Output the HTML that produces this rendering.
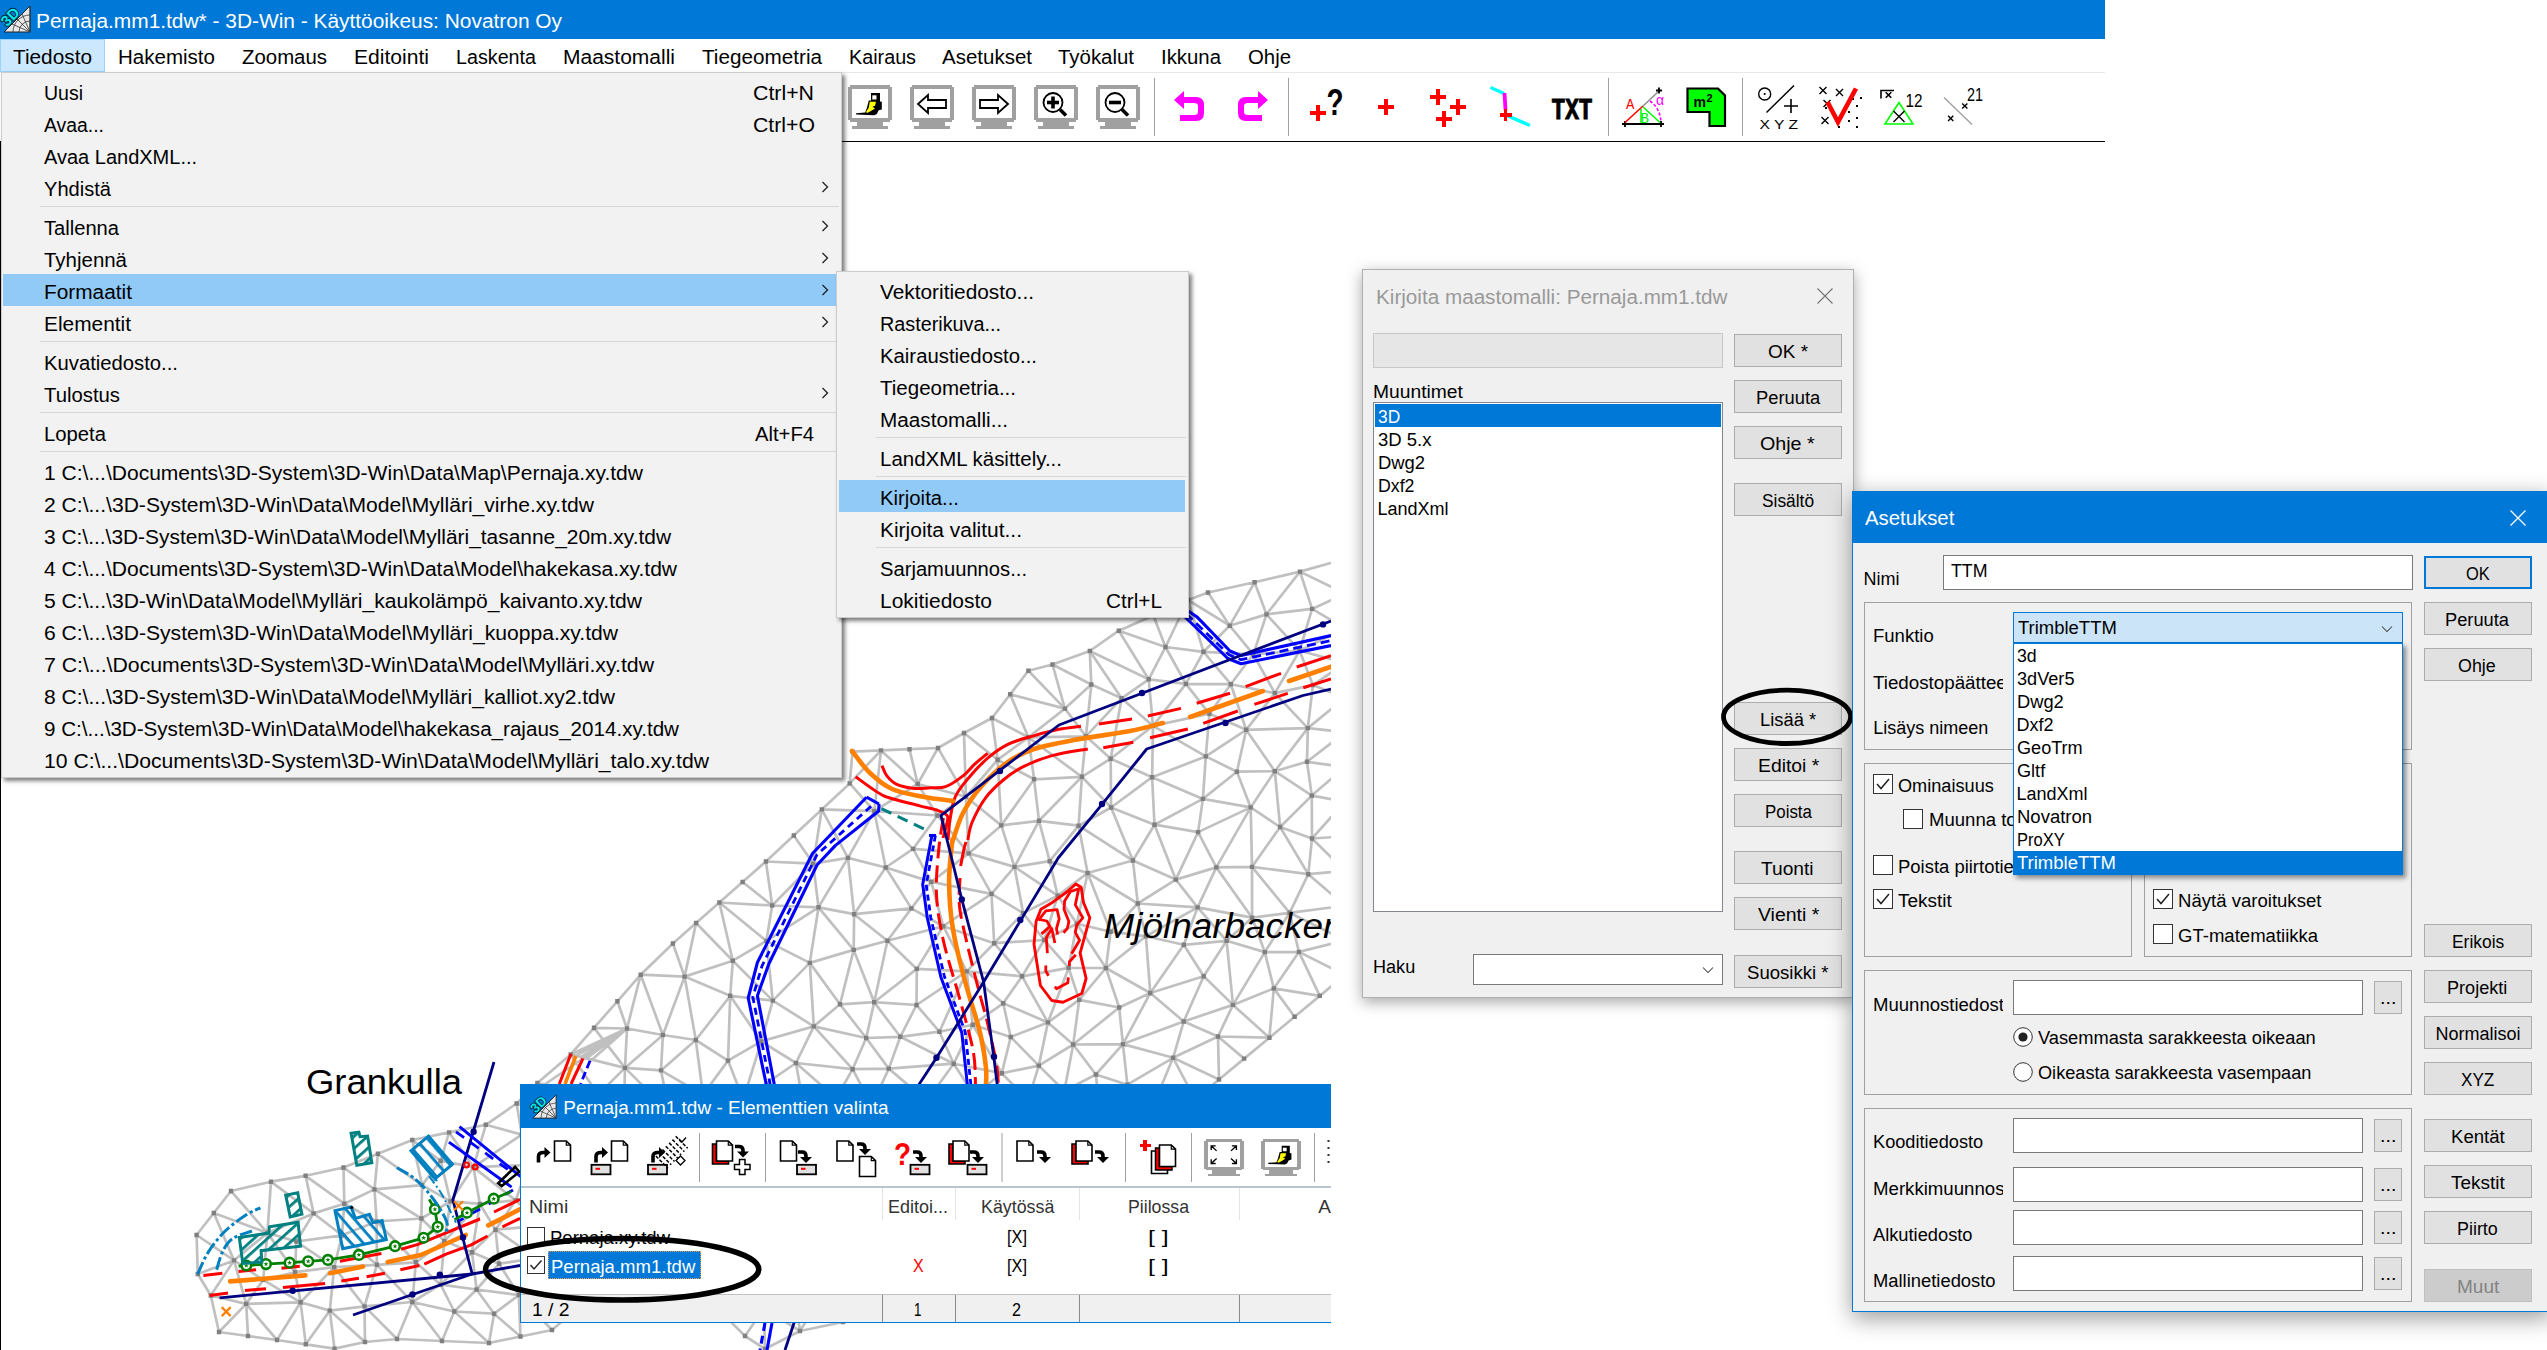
<!DOCTYPE html>
<html lang="fi"><head><meta charset="utf-8"><title>3D-Win</title><style>
html,body{margin:0;padding:0;background:#fff;}
body{width:2547px;height:1350px;position:relative;overflow:hidden;font-family:"Liberation Sans", sans-serif;}
.a{position:absolute;box-sizing:border-box;}
.t{position:absolute;white-space:pre;display:inline-block;}
svg{position:absolute;overflow:visible;}
</style></head><body>
<svg width="1331" height="1350" style="left:0;top:0;overflow:hidden" viewBox="0 0 1331 1350">
<path d="M1127.4 1084.7L1173.1 1057.8M472.0 1252.2L495.5 1229.7M968.6 1296.4L937.2 1302.8M943.2 926.2L911.4 908.4M948.7 1245.8L915.2 1238.2M277.0 1340.0L246.2 1303.9M909.5 749.2L917.7 784.0M630.6 1223.7L596.3 1280.0M1111.1 807.5L1078.6 825.7M449.1 1132.4L485.8 1124.8M1345.0 559.0L1345.0 593.7M916.8 968.9L887.4 940.8M968.7 853.4L931.3 881.9M616.2 1166.8L596.1 1194.5M972.7 1024.8L966.7 971.4M871.8 1105.4L926.8 1101.0M888.8 1068.6L926.8 1101.0M1073.2 1044.5L1064.3 1091.0M1001.3 825.4L997.6 759.8M515.6 1200.4L495.5 1229.7M727.0 1318.0L746.5 1276.2M1085.9 736.3L1081.9 776.8M1300.0 571.6L1266.5 614.4M1183.7 1021.5L1233.0 1004.9M616.2 1166.8L586.3 1128.1M1001.3 825.4L1039.0 820.8M1345.0 593.7L1345.0 628.3M938.0 748.0L965.9 796.8M765.0 1349.0L745.0 1336.0M827.2 1174.2L812.7 1205.6M854.1 914.2L885.7 867.5M1075.0 1207.5L1038.7 1196.6M1299.6 650.7L1312.1 608.9M295.1 1272.2L263.2 1279.9M840.0 1004.3L809.8 962.9M1269.4 1037.7L1218.0 1036.5M617.4 1001.3L640.7 974.7M625.0 1067.9L662.9 1035.0M728.9 1163.1L737.6 1202.7M745.0 1336.0L727.0 1318.0M968.7 853.4L1014.5 866.9M295.1 1272.2L267.4 1232.9M1203.7 976.3L1233.0 1004.9M1345.0 871.0L1308.3 874.2M640.7 974.7L672.9 943.5M566.0 1318.0L596.3 1280.0M1064.3 1091.0L1028.1 1100.2M1345.0 801.7L1345.0 836.3M552.0 1330.0L518.8 1295.1M412.3 1140.0L440.7 1160.8M1209.4 713.8L1153.0 725.9M521.8 1134.6L473.4 1167.1M1188.0 600.0L1229.7 625.7M1345.0 836.3L1345.0 871.0M1013.1 1219.4L1006.0 1175.3M1056.6 1124.4L1101.2 1128.4M630.6 1223.7L581.9 1231.5M566.0 1318.0L552.0 1330.0M1311.8 795.6L1312.0 838.5M1345.0 940.3L1298.9 951.9M1345.0 801.7L1312.0 838.5M1154.5 824.7L1202.9 798.9M795.3 1155.1L777.8 1197.1M1110.6 931.7L1076.9 923.7M1289.6 912.8L1252.0 866.9M743.3 1099.4L803.7 1107.5M1127.4 1084.7L1160.2 1088.7M854.6 1202.0L825.3 1236.5M552.0 1330.0L520.5 1336.5M953.7 1063.7L974.2 1095.2M966.0 1200.9L922.8 1196.7M878.9 1235.1L867.9 1282.6M376.9 1264.8L376.6 1221.5M1068.6 967.9L1044.2 940.0M1230.8 684.2L1185.9 683.9M536.7 1258.2L581.9 1231.5M825.3 1236.5L812.7 1205.6M821.8 809.4L849.7 783.4M1006.0 1175.3L1010.6 1134.7M334.2 1267.2L295.1 1272.2M905.8 1309.2L898.6 1268.5M1183.8 944.8L1197.6 907.4M1085.9 736.3L1028.4 737.3M1269.4 1037.7L1244.2 1058.6M1209.4 713.8L1205.8 756.4M1209.4 713.8L1230.8 684.2M1152.1 777.2L1110.7 758.7M1028.4 737.3L1064.9 708.6M1067.2 1164.9L1038.7 1196.6M1203.5 651.8L1165.5 647.0M1049.7 861.2L1039.0 820.8M623.6 1127.3L616.2 1166.8M1252.0 866.9L1250.7 807.4M772.2 905.5L813.2 863.6M640.7 974.7L684.6 976.6M543.9 1225.4L581.9 1231.5M1183.7 1021.5L1150.3 993.0M1252.0 866.9L1216.3 867.4M1154.5 824.7L1152.1 777.2M653.2 1286.0L709.5 1285.9M374.5 1189.4L421.4 1218.5M928.9 1152.1L922.8 1196.7M678.5 1176.3L649.5 1158.4M616.2 1166.8L649.5 1158.4M1127.4 1084.7L1095.9 1074.5M1022.1 976.3L994.2 943.2M1246.2 729.8L1274.8 771.2M874.3 811.2L913.1 848.9M937.4 815.5L913.1 848.9M953.7 1063.7L900.3 1036.8M1205.8 756.4L1153.0 725.9M625.0 1067.9L661.0 1070.4M1219.0 1079.5L1173.1 1057.8M1105.9 968.0L1119.2 1007.5M1010.2 694.4L1028.4 737.3M1047.9 1022.4L1022.1 976.3M728.9 1163.1L678.5 1176.3M1203.7 976.3L1150.3 993.0M1236.9 771.7L1250.7 807.4M1253.3 654.3L1266.5 614.4M1153.0 725.9L1110.7 758.7M444.3 1241.1L421.4 1218.5M1183.8 944.8L1150.3 993.0M271.0 1181.7L267.4 1232.9M1000.0 1290.0L981.8 1244.0M472.0 1252.2L440.6 1284.7M1153.4 615.4L1165.5 647.0M800.0 1331.0L791.9 1276.7M772.8 1000.6L813.8 1026.4M746.5 1276.2L764.1 1308.3M719.4 902.5L732.8 960.7M772.2 905.5L818.5 907.3M793.8 835.5L821.8 809.4M234.0 1260.4L246.2 1303.9M746.5 1276.2L709.5 1285.9M1273.8 988.4L1298.9 951.9M1110.6 931.7L1145.9 936.3M1274.8 771.2L1250.7 807.4M473.4 1167.1L450.5 1201.4M1294.6 1016.8L1269.4 1037.7M888.8 1068.6L900.3 1036.8M852.6 1069.2L796.0 1063.0M965.9 796.8L997.6 759.8M196.6 1235.0L197.8 1274.0M766.4 940.9L732.8 960.7M778.8 1237.0L791.9 1276.7M1280.1 827.0L1311.8 795.6M196.6 1235.0L234.0 1260.4M334.5 1348.6L305.8 1344.3M1253.3 654.3L1203.5 651.8M953.7 1063.7L1001.8 1073.2M1118.8 630.7L1148.7 679.3M964.0 733.0L992.0 718.0M1111.1 807.5L1110.7 758.7M1266.5 614.4L1229.7 625.7M412.3 1140.0L422.1 1185.1M365.0 1342.0L329.8 1310.6M854.6 1202.0L812.7 1205.6M1073.2 1044.5L1119.2 1007.5M305.8 1344.3L277.0 1340.0M992.0 718.0L1010.2 694.4M1123.8 1159.9L1100.0 1180.0M849.7 783.4L874.3 811.2M825.3 1236.5L833.4 1277.4M210.8 1295.5L246.2 1303.9M1001.8 1073.2L1010.7 1037.0M905.8 1309.2L867.9 1282.6M793.8 835.5L813.2 863.6M1175.8 879.6L1216.3 867.4M231.0 1191.0L271.0 1181.7M800.0 1331.0L833.4 1277.4M1236.9 771.7L1205.8 756.4M1105.9 968.0L1076.9 923.7M1100.0 1180.0L1075.0 1207.5M765.0 1349.0L764.1 1308.3M887.4 940.8L853.7 949.9M1001.3 825.4L1014.5 866.9M1028.4 737.3L1081.9 776.8M555.3 1114.7L598.3 1094.5M1111.1 807.5L1152.1 777.2M271.0 1181.7L305.6 1175.8M1153.4 615.4L1188.0 600.0M931.3 881.9L885.7 867.5M623.6 1127.3L649.5 1158.4M476.6 1289.5L494.1 1313.7M715.2 1249.2L704.2 1197.3M1121.6 698.3L1153.0 725.9M1188.0 600.0L1208.0 592.5M937.2 1302.8L905.8 1309.2M537.4 1083.0L555.3 1114.7M334.2 1267.2L296.3 1241.5M1298.9 951.9L1264.8 952.1M662.6 1318.0L653.2 1286.0M1110.6 931.7L1087.6 873.0M905.8 1309.2L874.4 1315.6M965.9 796.8L1001.3 825.4M854.6 1202.0L827.2 1174.2M516.6 1103.5L537.4 1083.0M518.8 1295.1L560.1 1284.9M1253.3 654.3L1299.6 650.7M682.8 1261.9L646.5 1252.8M1218.0 1036.5L1173.1 1057.8M476.6 1289.5L440.6 1284.7M871.8 1105.4L862.0 1150.9M1345.0 663.0L1345.0 697.7M1203.7 976.3L1226.6 940.8M948.7 1245.8L922.8 1196.7M1183.8 944.8L1226.6 940.8M1307.8 728.1L1307.0 761.8M661.0 1070.4L703.0 1094.8M1289.6 912.8L1308.3 874.2M1198.1 832.1L1175.8 879.6M305.8 1344.3L329.8 1310.6M415.9 1262.3L421.4 1218.5M1345.0 628.3L1299.6 650.7M694.8 1318.0L662.6 1318.0M728.9 1163.1L757.7 1139.4M796.0 1063.0L761.3 1041.4M898.6 1268.5L915.2 1238.2M1152.1 777.2L1153.0 725.9M684.6 976.6L695.8 1040.0M1127.4 1084.7L1122.9 1044.1M669.4 1112.2L661.0 1070.4M623.6 1127.3L669.4 1112.2M1345.0 767.0L1307.0 761.8M706.6 1128.9L703.0 1094.8M928.9 1152.1L926.8 1101.0M1269.4 1037.7L1273.8 988.4M640.7 974.7L627.0 1028.5M1068.6 967.9L1079.2 999.9M581.9 1231.5L596.1 1194.5M965.9 796.8L937.4 815.5M849.7 783.4L881.0 750.4M1067.2 1164.9L1056.6 1124.4M1274.8 693.1L1312.9 685.1M1073.2 1044.5L1038.8 1065.6M1105.9 968.0L1145.9 936.3M926.8 1101.0L974.2 1095.2M728.0 1060.6L703.0 1094.8M1100.0 1180.0L1101.2 1128.4M928.9 1152.1L959.0 1166.0M727.0 1318.0L709.5 1285.9M931.3 881.9L943.2 926.2M719.4 902.5L772.2 905.5M415.9 1262.3L376.6 1221.5M772.8 1000.6L766.4 940.9M943.2 926.2L994.2 943.2M515.6 1200.4L473.4 1167.1M772.8 1000.6L809.8 962.9M1188.0 600.0L1203.5 651.8M669.4 1112.2L625.0 1067.9M1006.0 1175.3L959.0 1166.0M916.5 1005.0L900.3 1036.8M485.8 1124.8L516.6 1103.5M1152.1 777.2L1205.8 756.4M706.6 1128.9L743.3 1099.4M821.8 809.4L848.0 857.9M694.8 1318.0L709.5 1285.9M646.9 1191.6L649.5 1158.4M1183.7 1021.5L1218.0 1036.5M1345.0 628.3L1345.0 663.0M1183.7 1021.5L1173.1 1057.8M1087.6 873.0L1057.7 895.7M305.6 1175.8L313.6 1213.4M695.8 1040.0L662.9 1035.0M728.0 1060.6L743.3 1099.4M727.0 1318.0L694.8 1318.0M472.0 1252.2L444.3 1241.1M1280.1 827.0L1308.3 874.2M489.0 1343.0L494.1 1313.7M1087.6 873.0L1076.9 923.7M840.0 1004.3L853.7 949.9M672.9 943.5L696.1 923.0M854.1 914.2L853.7 949.9M1226.6 940.8L1197.6 907.4M796.0 1063.0L803.7 1107.5M197.8 1274.0L234.0 1260.4M1345.0 697.7L1307.8 728.1M1100.0 1180.0L1067.2 1164.9M1252.1 917.7L1216.3 867.4M778.8 1237.0L825.3 1236.5M543.9 1225.4L515.6 1200.4M263.2 1279.9L246.2 1303.9M852.6 1069.2L836.0 1098.3M1345.0 871.0L1345.0 905.7M852.6 1069.2L866.2 1038.0M991.5 893.9L1014.5 866.9M489.0 1343.0L454.3 1311.5M343.5 1167.5L374.5 1189.4M365.0 1342.0L364.5 1306.4M1047.9 1022.4L1079.2 999.9M1345.0 905.7L1345.0 940.3M971.3 1132.3L1006.0 1175.3M1047.9 1022.4L1010.7 1037.0M520.5 1336.5L489.0 1343.0M1236.9 771.7L1202.9 798.9M342.0 1235.3L376.9 1264.8M1230.8 684.2L1203.5 651.8M1197.6 907.4L1252.1 917.7M630.6 1223.7L596.1 1194.5M931.3 881.9L991.5 893.9M313.6 1213.4L344.3 1203.7M1300.0 571.6L1345.0 593.7M849.7 783.4L852.5 751.6M479.9 1203.9L495.5 1229.7M809.8 962.9L813.8 1026.4M715.2 1249.2L746.5 1276.2M489.0 1343.0L442.0 1341.0M1057.7 895.7L1044.2 940.0M570.7 1054.4L598.3 1094.5M543.9 1225.4L558.2 1196.0M1274.8 771.2L1307.0 761.8M1246.2 729.8L1205.8 756.4M630.4 1318.0L596.3 1280.0M646.9 1191.6L678.5 1176.3M1246.2 729.8L1230.8 684.2M852.5 751.6L881.0 750.4M499.1 1263.7L518.8 1295.1M1244.2 1058.6L1219.0 1079.5M305.6 1175.8L344.3 1203.7M213.8 1213.0L267.4 1232.9M1085.9 736.3L1091.3 684.5M823.0 1135.9L795.3 1155.1M1028.4 670.7L1064.9 708.6M1050.0 1235.0L1038.7 1196.6M596.3 1280.0L646.5 1252.8M1219.0 1079.5L1195.2 1099.6M1064.3 1091.0L1095.9 1074.5M852.6 1069.2L813.8 1026.4M277.0 1340.0L248.0 1336.0M1132.9 860.5L1137.8 903.5M778.8 1237.0L777.8 1197.1M791.9 1276.7L825.3 1236.5M1010.6 1134.7L974.2 1095.2M570.7 1054.4L625.0 1067.9M1010.2 694.4L1028.4 670.7M1175.8 879.6L1197.6 907.4M695.8 1040.0L661.0 1070.4M1025.0 1262.5L1013.1 1219.4M1087.6 873.0L1078.6 825.7M248.0 1336.0L219.0 1332.0M964.0 733.0L965.9 796.8M376.6 1221.5L421.4 1218.5M1209.4 713.8L1185.9 683.9M1028.4 670.7L1052.5 664.5M1244.2 1058.6L1218.0 1036.5M518.8 1295.1L476.6 1289.5M454.3 1311.5L476.6 1289.5M364.5 1306.4L376.9 1264.8M1273.8 988.4L1233.0 1004.9M623.6 1127.3L598.3 1094.5M922.8 1196.7L889.5 1184.0M1050.0 1235.0L1025.0 1262.5M964.0 733.0L997.6 759.8M536.7 1258.2L560.1 1284.9M1105.9 968.0L1150.3 993.0M520.5 1336.5L518.8 1295.1M1067.2 1164.9L1010.6 1134.7M1252.0 866.9L1280.1 827.0M1010.7 1037.0L1003.2 1003.3M1280.1 827.0L1312.0 838.5M966.0 1200.9L981.8 1244.0M343.5 1167.5L377.9 1153.8M1047.9 1022.4L1068.6 967.9M669.4 1112.2L706.6 1128.9M1208.0 592.5L1229.7 625.7M889.5 1184.0L878.9 1235.1M1119.2 1007.5L1150.3 993.0M1345.0 975.0L1298.9 951.9M1252.0 866.9L1308.3 874.2M566.0 1318.0L560.1 1284.9M965.9 796.8L968.7 853.4M1289.6 912.8L1264.8 952.1M248.0 1336.0L246.2 1303.9M938.0 748.0L917.7 784.0M778.8 1237.0L812.7 1205.6M728.0 1060.6L695.8 1040.0M966.7 971.4L939.4 1031.7M1300.0 571.6L1312.1 608.9M809.8 962.9L818.5 907.3M848.0 857.9L854.1 914.2M968.6 1296.4L948.7 1245.8M1087.6 873.0L1049.7 861.2M1110.6 931.7L1137.8 903.5M562.1 1159.8L555.3 1114.7M1076.9 923.7L1044.2 940.0M1022.1 976.3L1044.2 940.0M630.6 1223.7L646.9 1191.6M1345.0 905.7L1308.3 874.2M1274.8 771.2L1280.1 827.0M833.4 1277.4L878.9 1235.1M1173.1 1057.8L1122.9 1044.1M672.9 943.5L684.6 976.6M422.1 1185.1L421.4 1218.5M900.3 1036.8L939.4 1031.7M449.1 1132.4L440.7 1160.8M968.7 853.4L991.5 893.9M673.8 1211.3L646.9 1191.6M1137.8 903.5L1197.6 907.4M1075.0 1207.5L1050.0 1235.0M499.1 1263.7L495.5 1229.7M706.6 1128.9L649.5 1158.4M1203.7 976.3L1183.7 1021.5M684.6 976.6L732.8 960.7M1345.0 836.3L1312.0 838.5M305.6 1175.8L343.5 1167.5M1345.0 905.7L1289.6 912.8M971.3 1132.3L1010.6 1134.7M528.3 1165.0L521.8 1134.6M1145.9 936.3L1150.3 993.0M596.3 1280.0L581.9 1231.5M1208.0 592.5L1254.6 582.3M234.0 1260.4L263.2 1279.9M627.0 1028.5L625.0 1067.9M874.4 1315.6L843.0 1322.0M213.8 1213.0L234.0 1260.4M342.0 1235.3L334.2 1267.2M874.2 1002.2L866.2 1038.0M537.4 1083.0L570.7 1054.4M1121.6 698.3L1091.3 684.5M300.6 1302.3L246.2 1303.9M823.0 1135.9L862.0 1150.9M803.7 1107.5L757.7 1139.4M777.8 1197.1L757.7 1139.4M479.9 1203.9L450.5 1201.4M1001.8 1073.2L974.2 1095.2M1001.8 1073.2L1038.8 1065.6M1345.0 593.7L1312.1 608.9M966.7 971.4L1003.2 1003.3M1345.0 697.7L1345.0 732.3M777.8 1197.1L812.7 1205.6M1122.9 1044.1L1095.9 1074.5M1023.1 913.1L1044.2 940.0M1147.6 1139.8L1101.2 1128.4M682.8 1261.9L653.2 1286.0M415.9 1262.3L376.9 1264.8M1209.4 713.8L1246.2 729.8M562.1 1159.8L528.3 1165.0M1081.9 776.8L1078.6 825.7M821.8 809.4L813.2 863.6M1195.2 1099.6L1173.1 1057.8M898.6 1268.5L878.9 1235.1M1010.7 1037.0L1038.8 1065.6M728.9 1163.1L777.8 1197.1M1052.5 664.5L1091.3 684.5M706.6 1128.9L678.5 1176.3M953.7 1063.7L972.7 1024.8M719.4 902.5L742.6 882.0M1345.0 767.0L1311.8 795.6M968.6 1296.4L981.8 1244.0M528.3 1165.0L558.2 1196.0M1307.8 728.1L1246.2 729.8M1289.6 912.8L1252.1 917.7M827.2 1174.2L795.3 1155.1M673.8 1211.3L682.8 1261.9M1056.6 1124.4L1028.1 1100.2M1188.0 600.0L1165.5 647.0M562.1 1159.8L558.2 1196.0M342.0 1235.3L313.6 1213.4M1311.8 795.6L1307.0 761.8M874.4 1315.6L867.9 1282.6M412.3 1302.0L415.9 1262.3M669.4 1112.2L703.0 1094.8M581.9 1231.5L558.2 1196.0M364.5 1306.4L334.2 1267.2M1023.1 913.1L1014.5 866.9M928.9 1152.1L889.5 1184.0M1047.9 1022.4L1003.2 1003.3M878.9 1235.1L915.2 1238.2M1183.7 1021.5L1122.9 1044.1M737.6 1202.7L777.8 1197.1M743.3 1099.4L703.0 1094.8M953.7 1063.7L939.4 1031.7M444.3 1241.1L440.6 1284.7M485.8 1124.8L521.8 1134.6M442.0 1341.0L412.3 1302.0M1132.9 860.5L1175.8 879.6M397.0 1339.0L365.0 1342.0M730.2 995.8L695.8 1040.0M1013.1 1219.4L981.8 1244.0M536.7 1258.2L499.1 1263.7M1198.1 832.1L1202.9 798.9M1319.8 995.9L1273.8 988.4M594.0 1027.8L627.0 1028.5M596.1 1194.5L558.2 1196.0M422.1 1185.1L440.7 1160.8M630.4 1318.0L653.2 1286.0M562.1 1159.8L596.1 1194.5M1175.8 879.6L1137.8 903.5M948.7 1245.8L981.8 1244.0M662.6 1318.0L630.4 1318.0M1148.7 679.3L1185.9 683.9M791.9 1276.7L833.4 1277.4M1203.5 651.8L1185.9 683.9M848.0 857.9L813.2 863.6M1195.2 1099.6L1160.2 1088.7M1173.1 1057.8L1160.2 1088.7M1345.0 663.0L1299.6 650.7M646.5 1252.8L653.2 1286.0M1067.2 1164.9L1006.0 1175.3M1111.1 807.5L1154.5 824.7M1085.9 736.3L1110.7 758.7M1345.0 940.3L1345.0 975.0M916.8 968.9L874.2 1002.2M342.0 1235.3L344.3 1203.7M1253.3 654.3L1230.8 684.2M745.0 1336.0L764.1 1308.3M444.3 1241.1L450.5 1201.4M342.0 1235.3L296.3 1241.5M515.6 1200.4L528.3 1165.0M1111.1 807.5L1081.9 776.8M715.2 1249.2L709.5 1285.9M334.2 1267.2L300.6 1302.3M555.3 1114.7L586.3 1128.1M928.9 1152.1L971.3 1132.3M521.8 1134.6L555.3 1114.7M364.5 1306.4L329.8 1310.6M412.3 1302.0L440.6 1284.7M772.8 1000.6L732.8 960.7M1226.6 940.8L1264.8 952.1M499.1 1263.7L476.6 1289.5M479.9 1203.9L473.4 1167.1M1236.9 771.7L1246.2 729.8M422.1 1185.1L374.5 1189.4M449.1 1132.4L473.4 1167.1M715.2 1249.2L737.6 1202.7M1203.5 651.8L1229.7 625.7M515.6 1200.4L558.2 1196.0M848.0 857.9L818.5 907.3M874.2 1002.2L900.3 1036.8M581.9 1231.5L560.1 1284.9M778.8 1237.0L746.5 1276.2M1101.2 1128.4L1095.9 1074.5M1127.4 1084.7L1101.2 1128.4M974.2 1095.2L1028.1 1100.2M1274.8 771.2L1311.8 795.6M1150.3 993.0L1122.9 1044.1M374.5 1189.4L344.3 1203.7M536.7 1258.2L518.8 1295.1M728.9 1163.1L704.2 1197.3M1299.6 650.7L1266.5 614.4M966.0 1200.9L948.7 1245.8M803.7 1107.5L836.0 1098.3M871.8 1105.4L899.4 1133.4M295.1 1272.2L300.6 1302.3M881.0 750.4L909.5 749.2M1148.7 679.3L1121.6 698.3M1198.1 832.1L1154.5 824.7M1132.9 860.5L1154.5 824.7M518.8 1295.1L494.1 1313.7M454.3 1311.5L494.1 1313.7M566.0 1318.0L518.8 1295.1M334.2 1267.2L376.9 1264.8M885.7 867.5L913.1 848.9M1047.9 1022.4L1073.2 1044.5M696.1 923.0L719.4 902.5M931.3 881.9L913.1 848.9M1345.0 663.0L1312.9 685.1M673.8 1211.3L704.2 1197.3M823.0 1135.9L803.7 1107.5M887.4 940.8L854.1 914.2M796.0 1063.0L836.0 1098.3M994.2 943.2L1044.2 940.0M596.3 1280.0L653.2 1286.0M479.9 1203.9L444.3 1241.1M1250.7 807.4L1216.3 867.4M706.6 1128.9L757.7 1139.4M1039.0 820.8L1078.6 825.7M874.3 811.2L885.7 867.5M818.5 907.3L813.2 863.6M1198.1 832.1L1250.7 807.4M1047.9 1022.4L1038.8 1065.6M313.6 1213.4L296.3 1241.5M695.8 1040.0L703.0 1094.8M971.3 1132.3L926.8 1101.0M1198.1 832.1L1216.3 867.4M1081.9 776.8L1110.7 758.7M827.2 1174.2L862.0 1150.9M916.8 968.9L966.7 971.4M454.3 1311.5L440.6 1284.7M937.2 1302.8L898.6 1268.5M916.8 968.9L916.5 1005.0M1075.0 1207.5L1067.2 1164.9M305.8 1344.3L300.6 1302.3M887.4 940.8L911.4 908.4M1034.1 779.3L1081.9 776.8M881.0 750.4L917.7 784.0M442.0 1341.0L397.0 1339.0M972.7 1024.8L939.4 1031.7M1280.1 827.0L1250.7 807.4M640.7 974.7L662.9 1035.0M991.5 893.9L943.2 926.2M971.3 1132.3L959.0 1166.0M888.8 1068.6L953.7 1063.7M742.6 882.0L772.2 905.5M871.8 1105.4L823.0 1135.9M1087.6 873.0L1137.8 903.5M415.9 1262.3L440.6 1284.7M772.8 1000.6L761.3 1041.4M796.0 1063.0L813.8 1026.4M848.0 857.9L885.7 867.5M1028.1 1100.2L1038.8 1065.6M627.0 1028.5L662.9 1035.0M1067.2 1164.9L1101.2 1128.4M1299.6 650.7L1274.8 693.1M1195.2 1099.6L1171.4 1119.7M343.5 1167.5L344.3 1203.7M300.6 1302.3L329.8 1310.6M1307.8 728.1L1274.8 693.1M1308.3 874.2L1312.0 838.5M1252.0 866.9L1252.1 917.7M1022.1 976.3L1068.6 967.9M673.8 1211.3L715.2 1249.2M1076.9 923.7L1068.6 967.9M450.5 1201.4L421.4 1218.5M833.4 1277.4L867.9 1282.6M219.0 1332.0L210.8 1295.5M825.3 1236.5L878.9 1235.1M1049.7 861.2L1057.7 895.7M871.8 1105.4L836.0 1098.3M1034.1 779.3L997.6 759.8M888.8 1068.6L866.2 1038.0M916.8 968.9L943.2 926.2M598.3 1094.5L586.3 1128.1M1052.5 664.5L1089.8 651.0M231.0 1191.0L267.4 1232.9M1034.1 779.3L1039.0 820.8M937.2 1302.8L948.7 1245.8M728.0 1060.6L761.3 1041.4M898.6 1268.5L948.7 1245.8M728.9 1163.1L706.6 1128.9M899.4 1133.4L862.0 1150.9M1147.6 1139.8L1127.4 1084.7M1202.9 798.9L1250.7 807.4M1226.6 940.8L1252.1 917.7M1025.0 1262.5L1000.0 1290.0M1121.6 698.3L1110.7 758.7M1273.8 988.4L1264.8 952.1M536.7 1258.2L495.5 1229.7M1345.0 732.3L1307.8 728.1M922.8 1196.7L915.2 1238.2M377.9 1153.8L412.3 1140.0M916.5 1005.0L939.4 1031.7M889.5 1184.0L862.0 1150.9M1154.5 824.7L1175.8 879.6M623.6 1127.3L625.0 1067.9M442.0 1341.0L454.3 1311.5M377.9 1153.8L374.5 1189.4M684.6 976.6L662.9 1035.0M818.5 907.3L853.7 949.9M1300.0 571.6L1345.0 559.0M1197.6 907.4L1216.3 867.4M669.4 1112.2L649.5 1158.4M1132.9 860.5L1078.6 825.7M412.3 1302.0L376.9 1264.8M730.2 995.8L728.0 1060.6M1073.2 1044.5L1095.9 1074.5M543.9 1225.4L495.5 1229.7M800.0 1331.0L765.0 1349.0M766.4 940.9L818.5 907.3M968.7 853.4L913.1 848.9M1145.9 936.3L1197.6 907.4M1089.8 651.0L1148.7 679.3M1266.5 614.4L1312.1 608.9M971.3 1132.3L974.2 1095.2M888.8 1068.6L871.8 1105.4M972.7 1024.8L1003.2 1003.3M1269.4 1037.7L1233.0 1004.9M598.2 1318.0L596.3 1280.0M479.9 1203.9L472.0 1252.2M871.8 1105.4L852.6 1069.2M888.8 1068.6L852.6 1069.2M1056.6 1124.4L1010.6 1134.7M966.7 971.4L916.5 1005.0M1025.0 1262.5L981.8 1244.0M1006.0 1175.3L1038.7 1196.6M1052.5 664.5L1064.9 708.6M966.7 971.4L994.2 943.2M898.6 1268.5L867.9 1282.6M765.9 861.5L772.2 905.5M730.2 995.8L732.8 960.7M1085.9 736.3L1121.6 698.3M1233.0 1004.9L1264.8 952.1M1148.7 679.3L1165.5 647.0M313.6 1213.4L267.4 1232.9M1022.1 976.3L966.7 971.4M473.4 1167.1L440.7 1160.8M772.8 1000.6L730.2 995.8M795.3 1155.1L757.7 1139.4M594.0 1027.8L625.0 1067.9M1034.1 779.3L1001.3 825.4M926.8 1101.0L899.4 1133.4M1049.7 861.2L1078.6 825.7M730.2 995.8L684.6 976.6M342.0 1235.3L376.6 1221.5M1202.9 798.9L1205.8 756.4M809.8 962.9L853.7 949.9M795.3 1155.1L812.7 1205.6M562.1 1159.8L521.8 1134.6M1299.6 650.7L1312.9 685.1M1219.0 1079.5L1218.0 1036.5M1307.8 728.1L1312.9 685.1M854.6 1202.0L878.9 1235.1M854.1 914.2L911.4 908.4M623.6 1127.3L586.3 1128.1M625.0 1067.9L598.3 1094.5M596.3 1280.0L560.1 1284.9M1254.6 582.3L1300.0 571.6M719.4 902.5L766.4 940.9M1345.0 940.3L1289.6 912.8M966.7 971.4L943.2 926.2M1252.1 917.7L1264.8 952.1M992.0 718.0L997.6 759.8M234.0 1260.4L267.4 1232.9M1056.6 1124.4L1064.3 1091.0M854.6 1202.0L862.0 1150.9M694.8 1318.0L653.2 1286.0M1345.0 801.7L1311.8 795.6M377.9 1153.8L422.1 1185.1M412.3 1302.0L364.5 1306.4M889.5 1184.0L899.4 1133.4M922.8 1196.7L959.0 1166.0M1254.6 582.3L1229.7 625.7M1039.0 820.8L1014.5 866.9M843.0 1322.0L800.0 1331.0M1319.8 995.9L1298.9 951.9M1345.0 871.0L1312.0 838.5M440.7 1160.8L450.5 1201.4M673.8 1211.3L678.5 1176.3M570.7 1054.4L594.0 1027.8M821.8 809.4L874.3 811.2M1165.5 647.0L1185.9 683.9M219.0 1332.0L246.2 1303.9M766.4 940.9L809.8 962.9M765.9 861.5L813.2 863.6M1289.6 912.8L1298.9 951.9M992.0 718.0L1028.4 737.3M594.0 1027.8L617.4 1001.3M1345.0 732.3L1345.0 767.0M800.0 1331.0L764.1 1308.3M1132.9 860.5L1111.1 807.5M334.5 1348.6L329.8 1310.6M840.0 1004.3L866.2 1038.0M1132.9 860.5L1087.6 873.0M1022.1 976.3L1003.2 1003.3M796.0 1063.0L743.3 1099.4M472.0 1252.2L476.6 1289.5M965.9 796.8L917.7 784.0M778.8 1237.0L715.2 1249.2M397.0 1339.0L412.3 1302.0M1118.8 630.7L1165.5 647.0M1345.0 767.0L1345.0 801.7M300.6 1302.3L263.2 1279.9M630.4 1318.0L598.2 1318.0M843.0 1322.0L833.4 1277.4M1345.0 732.3L1307.0 761.8M696.1 923.0L732.8 960.7M617.4 1001.3L627.0 1028.5M742.6 882.0L765.9 861.5M1307.8 728.1L1274.8 771.2M334.2 1267.2L329.8 1310.6M1110.6 931.7L1105.9 968.0M937.4 815.5L874.3 811.2M1010.6 1134.7L1028.1 1100.2M1119.2 1007.5L1122.9 1044.1M598.2 1318.0L566.0 1318.0M516.6 1103.5L555.3 1114.7M730.2 995.8L761.3 1041.4M376.6 1221.5L374.5 1189.4M1023.1 913.1L994.2 943.2M1345.0 628.3L1312.1 608.9M887.4 940.8L874.2 1002.2M696.1 923.0L684.6 976.6M765.9 861.5L793.8 835.5M267.4 1232.9L296.3 1241.5M1345.0 975.0L1319.8 995.9M1123.8 1159.9L1101.2 1128.4M928.9 1152.1L899.4 1133.4M1006.0 1175.3L966.0 1200.9M1253.3 654.3L1274.8 693.1M972.7 1024.8L1010.7 1037.0M1014.5 866.9L1057.7 895.7M562.1 1159.8L616.2 1166.8M840.0 1004.3L813.8 1026.4M415.9 1262.3L444.3 1241.1M1319.8 995.9L1294.6 1016.8M499.1 1263.7L472.0 1252.2M1089.8 651.0L1091.3 684.5M661.0 1070.4L662.9 1035.0M646.9 1191.6L616.2 1166.8M528.3 1165.0L473.4 1167.1M854.6 1202.0L889.5 1184.0M1064.3 1091.0L1038.8 1065.6M1013.1 1219.4L1038.7 1196.6M1105.9 968.0L1079.2 999.9M778.8 1237.0L737.6 1202.7M909.5 749.2L938.0 748.0M1064.3 1091.0L1101.2 1128.4M848.0 857.9L874.3 811.2M365.0 1342.0L334.5 1348.6M900.3 1036.8L866.2 1038.0M772.2 905.5L766.4 940.9M1274.8 693.1L1230.8 684.2M646.9 1191.6L596.1 1194.5M536.7 1258.2L543.9 1225.4M938.0 748.0L964.0 733.0M1064.9 708.6L1091.3 684.5M562.1 1159.8L586.3 1128.1M1119.2 1007.5L1079.2 999.9M795.3 1155.1L803.7 1107.5M516.6 1103.5L521.8 1134.6M1073.2 1044.5L1122.9 1044.1M520.5 1336.5L494.1 1313.7M1147.6 1139.8L1123.8 1159.9M376.6 1221.5L344.3 1203.7M937.4 815.5L917.7 784.0M874.3 811.2L917.7 784.0M412.3 1302.0L454.3 1311.5M1028.4 737.3L997.6 759.8M791.9 1276.7L764.1 1308.3M213.8 1213.0L231.0 1191.0M823.0 1135.9L827.2 1174.2M479.9 1203.9L515.6 1200.4M1076.9 923.7L1057.7 895.7M1294.6 1016.8L1273.8 988.4M295.1 1272.2L296.3 1241.5M1148.7 679.3L1153.0 725.9M761.3 1041.4L813.8 1026.4M1085.9 736.3L1064.9 708.6M966.0 1200.9L959.0 1166.0M397.0 1339.0L364.5 1306.4M1039.0 820.8L1081.9 776.8M1253.3 654.3L1229.7 625.7M1153.0 725.9L1185.9 683.9M813.8 1026.4L866.2 1038.0M422.1 1185.1L450.5 1201.4M1171.4 1119.7L1160.2 1088.7M1236.9 771.7L1274.8 771.2M1073.2 1044.5L1079.2 999.9M881.0 750.4L874.3 811.2M968.7 853.4L1001.3 825.4M537.4 1083.0L598.3 1094.5M843.0 1322.0L867.9 1282.6M1049.7 861.2L1014.5 866.9M630.6 1223.7L646.5 1252.8M271.0 1181.7L313.6 1213.4M1246.2 729.8L1274.8 693.1M727.0 1318.0L764.1 1308.3M743.3 1099.4L757.7 1139.4M1145.9 936.3L1137.8 903.5M1218.0 1036.5L1233.0 1004.9M854.1 914.2L818.5 907.3M1147.6 1139.8L1160.2 1088.7M1105.9 968.0L1068.6 967.9M277.0 1340.0L300.6 1302.3M1010.2 694.4L1064.9 708.6M1226.6 940.8L1233.0 1004.9M1001.8 1073.2L972.7 1024.8M673.8 1211.3L646.5 1252.8M1023.1 913.1L991.5 893.9M885.7 867.5L911.4 908.4M991.5 893.9L994.2 943.2M485.8 1124.8L473.4 1167.1M1171.4 1119.7L1147.6 1139.8M682.8 1261.9L715.2 1249.2M737.6 1202.7L704.2 1197.3M931.3 881.9L911.4 908.4M1050.0 1235.0L1013.1 1219.4M823.0 1135.9L836.0 1098.3M196.6 1235.0L213.8 1213.0M874.2 1002.2L853.7 949.9M953.7 1063.7L926.8 1101.0M1089.8 651.0L1121.6 698.3M673.8 1211.3L630.6 1223.7M210.8 1295.5L197.8 1274.0M887.4 940.8L943.2 926.2M1013.1 1219.4L966.0 1200.9M968.7 853.4L937.4 815.5M1203.7 976.3L1183.8 944.8M1028.4 737.3L1034.1 779.3M210.8 1295.5L234.0 1260.4M791.9 1276.7L746.5 1276.2M1001.8 1073.2L1028.1 1100.2M1089.8 651.0L1118.8 630.7M840.0 1004.3L874.2 1002.2M1183.8 944.8L1145.9 936.3M678.5 1176.3L704.2 1197.3M1202.9 798.9L1152.1 777.2M1023.1 913.1L1057.7 895.7M263.2 1279.9L267.4 1232.9M1118.8 630.7L1153.4 615.4M682.8 1261.9L709.5 1285.9M743.3 1099.4L761.3 1041.4M1000.0 1290.0L968.6 1296.4M916.5 1005.0L874.2 1002.2M1345.0 697.7L1312.9 685.1M922.8 1196.7L878.9 1235.1M1254.6 582.3L1266.5 614.4M412.3 1140.0L449.1 1132.4M627 1028.5L570.7 1054.4M627 1028.5L575 1056M627 1028.5L580 1057.5M627 1028.5L585 1059.5M627 1028.5L590 1061.5M627 1028.5L516.6 1103.5" fill="none" stroke="#c0c0c0" stroke-width="2.700"/><path d="M194.4 1232.8h4.4v4.4h-4.4zM211.6 1210.8h4.4v4.4h-4.4zM228.8 1188.8h4.4v4.4h-4.4zM268.8 1179.5h4.4v4.4h-4.4zM303.4 1173.6h4.4v4.4h-4.4zM341.3 1165.3h4.4v4.4h-4.4zM375.7 1151.5h4.4v4.4h-4.4zM410.1 1137.8h4.4v4.4h-4.4zM446.9 1130.2h4.4v4.4h-4.4zM483.6 1122.6h4.4v4.4h-4.4zM514.4 1101.3h4.4v4.4h-4.4zM535.2 1080.8h4.4v4.4h-4.4zM568.5 1052.2h4.4v4.4h-4.4zM591.8 1025.6h4.4v4.4h-4.4zM615.2 999.1h4.4v4.4h-4.4zM638.5 972.5h4.4v4.4h-4.4zM670.7 941.3h4.4v4.4h-4.4zM693.9 920.8h4.4v4.4h-4.4zM717.2 900.3h4.4v4.4h-4.4zM740.4 879.8h4.4v4.4h-4.4zM763.7 859.3h4.4v4.4h-4.4zM791.6 833.3h4.4v4.4h-4.4zM819.6 807.2h4.4v4.4h-4.4zM847.5 781.2h4.4v4.4h-4.4zM850.3 749.4h4.4v4.4h-4.4zM878.8 748.2h4.4v4.4h-4.4zM907.3 747.0h4.4v4.4h-4.4zM935.8 745.8h4.4v4.4h-4.4zM961.8 730.8h4.4v4.4h-4.4zM989.8 715.8h4.4v4.4h-4.4zM1008.0 692.1h4.4v4.4h-4.4zM1026.2 668.5h4.4v4.4h-4.4zM1050.3 662.3h4.4v4.4h-4.4zM1087.6 648.8h4.4v4.4h-4.4zM1116.6 628.5h4.4v4.4h-4.4zM1151.2 613.1h4.4v4.4h-4.4zM1185.8 597.8h4.4v4.4h-4.4zM1205.8 590.3h4.4v4.4h-4.4zM1252.4 580.1h4.4v4.4h-4.4zM1297.8 569.4h4.4v4.4h-4.4zM1342.8 556.8h4.4v4.4h-4.4zM1342.8 591.5h4.4v4.4h-4.4zM1342.8 626.1h4.4v4.4h-4.4zM1342.8 660.8h4.4v4.4h-4.4zM1342.8 695.5h4.4v4.4h-4.4zM1342.8 730.1h4.4v4.4h-4.4zM1342.8 764.8h4.4v4.4h-4.4zM1342.8 799.5h4.4v4.4h-4.4zM1342.8 834.1h4.4v4.4h-4.4zM1342.8 868.8h4.4v4.4h-4.4zM1342.8 903.5h4.4v4.4h-4.4zM1342.8 938.1h4.4v4.4h-4.4zM1342.8 972.8h4.4v4.4h-4.4zM1317.6 993.7h4.4v4.4h-4.4zM1292.4 1014.6h4.4v4.4h-4.4zM1267.2 1035.5h4.4v4.4h-4.4zM1242.0 1056.4h4.4v4.4h-4.4zM1216.8 1077.3h4.4v4.4h-4.4zM1193.0 1097.4h4.4v4.4h-4.4zM1169.2 1117.5h4.4v4.4h-4.4zM1145.4 1137.6h4.4v4.4h-4.4zM1121.6 1157.7h4.4v4.4h-4.4zM1097.8 1177.8h4.4v4.4h-4.4zM1072.8 1205.3h4.4v4.4h-4.4zM1047.8 1232.8h4.4v4.4h-4.4zM1022.8 1260.3h4.4v4.4h-4.4zM997.8 1287.8h4.4v4.4h-4.4zM966.4 1294.2h4.4v4.4h-4.4zM935.0 1300.6h4.4v4.4h-4.4zM903.6 1307.0h4.4v4.4h-4.4zM872.2 1313.4h4.4v4.4h-4.4zM840.8 1319.8h4.4v4.4h-4.4zM797.8 1328.8h4.4v4.4h-4.4zM762.8 1346.8h4.4v4.4h-4.4zM742.8 1333.8h4.4v4.4h-4.4zM724.8 1315.8h4.4v4.4h-4.4zM692.6 1315.8h4.4v4.4h-4.4zM660.4 1315.8h4.4v4.4h-4.4zM628.2 1315.8h4.4v4.4h-4.4zM596.0 1315.8h4.4v4.4h-4.4zM563.8 1315.8h4.4v4.4h-4.4zM549.8 1327.8h4.4v4.4h-4.4zM518.3 1334.3h4.4v4.4h-4.4zM486.8 1340.8h4.4v4.4h-4.4zM439.8 1338.8h4.4v4.4h-4.4zM394.8 1336.8h4.4v4.4h-4.4zM362.8 1339.8h4.4v4.4h-4.4zM332.3 1346.4h4.4v4.4h-4.4zM303.6 1342.1h4.4v4.4h-4.4zM274.8 1337.8h4.4v4.4h-4.4zM245.8 1333.8h4.4v4.4h-4.4zM216.8 1329.8h4.4v4.4h-4.4zM208.6 1293.3h4.4v4.4h-4.4zM195.6 1271.8h4.4v4.4h-4.4zM624.8 1026.3h4.4v4.4h-4.4zM1083.7 734.1h4.4v4.4h-4.4zM534.5 1256.0h4.4v4.4h-4.4zM1108.4 929.5h4.4v4.4h-4.4zM770.6 998.4h4.4v4.4h-4.4zM914.6 966.7h4.4v4.4h-4.4zM1146.5 677.1h4.4v4.4h-4.4zM496.9 1261.5h4.4v4.4h-4.4zM776.6 1234.8h4.4v4.4h-4.4zM926.7 1149.9h4.4v4.4h-4.4zM1130.7 858.3h4.4v4.4h-4.4zM886.6 1066.4h4.4v4.4h-4.4zM1305.6 725.9h4.4v4.4h-4.4zM963.7 794.6h4.4v4.4h-4.4zM339.8 1233.1h4.4v4.4h-4.4zM410.1 1299.8h4.4v4.4h-4.4zM845.8 855.7h4.4v4.4h-4.4zM231.8 1258.2h4.4v4.4h-4.4zM728.0 993.6h4.4v4.4h-4.4zM559.9 1157.6h4.4v4.4h-4.4zM682.4 974.4h4.4v4.4h-4.4zM1195.9 829.9h4.4v4.4h-4.4zM869.6 1103.2h4.4v4.4h-4.4zM362.3 1304.2h4.4v4.4h-4.4zM671.6 1209.1h4.4v4.4h-4.4zM1103.7 965.8h4.4v4.4h-4.4zM1026.2 735.1h4.4v4.4h-4.4zM1287.4 910.6h4.4v4.4h-4.4zM789.7 1274.5h4.4v4.4h-4.4zM1045.7 1020.2h4.4v4.4h-4.4zM680.6 1259.7h4.4v4.4h-4.4zM477.7 1201.7h4.4v4.4h-4.4zM969.1 1130.1h4.4v4.4h-4.4zM885.2 938.6h4.4v4.4h-4.4zM725.8 1058.4h4.4v4.4h-4.4zM1201.5 974.1h4.4v4.4h-4.4zM1271.6 986.2h4.4v4.4h-4.4zM1125.2 1082.5h4.4v4.4h-4.4zM1108.9 805.3h4.4v4.4h-4.4zM1207.2 711.6h4.4v4.4h-4.4zM850.4 1067.0h4.4v4.4h-4.4zM951.5 1061.5h4.4v4.4h-4.4zM1234.7 769.5h4.4v4.4h-4.4zM541.7 1223.2h4.4v4.4h-4.4zM621.4 1125.1h4.4v4.4h-4.4zM966.5 851.2h4.4v4.4h-4.4zM1062.7 706.4h4.4v4.4h-4.4zM1085.4 870.8h4.4v4.4h-4.4zM1065.0 1162.7h4.4v4.4h-4.4zM1020.9 910.9h4.4v4.4h-4.4zM820.8 1133.7h4.4v4.4h-4.4zM628.4 1221.5h4.4v4.4h-4.4zM1249.8 864.7h4.4v4.4h-4.4zM1010.9 1217.2h4.4v4.4h-4.4zM1251.1 652.1h4.4v4.4h-4.4zM851.9 912.0h4.4v4.4h-4.4zM1244.0 727.6h4.4v4.4h-4.4zM1181.6 942.6h4.4v4.4h-4.4zM644.7 1189.4h4.4v4.4h-4.4zM852.4 1199.8h4.4v4.4h-4.4zM513.4 1198.2h4.4v4.4h-4.4zM999.6 1071.0h4.4v4.4h-4.4zM667.2 1110.0h4.4v4.4h-4.4zM1152.3 822.5h4.4v4.4h-4.4zM825.0 1172.0h4.4v4.4h-4.4zM1019.9 974.1h4.4v4.4h-4.4zM837.8 1002.1h4.4v4.4h-4.4zM413.7 1260.1h4.4v4.4h-4.4zM1054.4 1122.2h4.4v4.4h-4.4zM929.1 879.7h4.4v4.4h-4.4zM1047.5 859.0h4.4v4.4h-4.4zM726.7 1160.9h4.4v4.4h-4.4zM704.4 1126.7h4.4v4.4h-4.4zM1181.5 1019.3h4.4v4.4h-4.4zM970.5 1022.6h4.4v4.4h-4.4zM1143.7 934.1h4.4v4.4h-4.4zM1074.7 921.5h4.4v4.4h-4.4zM1003.8 1173.1h4.4v4.4h-4.4zM622.8 1065.7h4.4v4.4h-4.4zM793.8 1060.8h4.4v4.4h-4.4zM676.3 1174.1h4.4v4.4h-4.4zM989.3 891.7h4.4v4.4h-4.4zM1173.6 877.4h4.4v4.4h-4.4zM1272.6 769.0h4.4v4.4h-4.4zM823.1 1234.3h4.4v4.4h-4.4zM1071.0 1042.3h4.4v4.4h-4.4zM713.0 1247.0h4.4v4.4h-4.4zM526.1 1162.8h4.4v4.4h-4.4zM1031.9 777.1h4.4v4.4h-4.4zM332.0 1265.0h4.4v4.4h-4.4zM735.4 1200.5h4.4v4.4h-4.4zM614.0 1164.6h4.4v4.4h-4.4zM935.2 813.3h4.4v4.4h-4.4zM311.4 1211.2h4.4v4.4h-4.4zM793.1 1152.9h4.4v4.4h-4.4zM693.6 1037.8h4.4v4.4h-4.4zM963.8 1198.7h4.4v4.4h-4.4zM999.1 823.2h4.4v4.4h-4.4zM469.8 1250.0h4.4v4.4h-4.4zM770.0 903.3h4.4v4.4h-4.4zM1296.7 949.7h4.4v4.4h-4.4zM519.6 1132.4h4.4v4.4h-4.4zM1119.4 696.1h4.4v4.4h-4.4zM872.1 809.0h4.4v4.4h-4.4zM1117.0 1005.3h4.4v4.4h-4.4zM516.6 1292.9h4.4v4.4h-4.4zM553.1 1112.5h4.4v4.4h-4.4zM1297.4 648.5h4.4v4.4h-4.4zM896.4 1266.3h4.4v4.4h-4.4zM1200.7 796.7h4.4v4.4h-4.4zM658.8 1068.2h4.4v4.4h-4.4zM1215.8 1034.3h4.4v4.4h-4.4zM1272.6 690.9h4.4v4.4h-4.4zM924.6 1098.8h4.4v4.4h-4.4zM964.5 969.2h4.4v4.4h-4.4zM775.6 1194.9h4.4v4.4h-4.4zM452.1 1309.3h4.4v4.4h-4.4zM1277.9 824.8h4.4v4.4h-4.4zM941.0 924.0h4.4v4.4h-4.4zM741.1 1097.2h4.4v4.4h-4.4zM1170.9 1055.6h4.4v4.4h-4.4zM946.5 1243.6h4.4v4.4h-4.4zM1149.9 775.0h4.4v4.4h-4.4zM914.3 1002.8h4.4v4.4h-4.4zM1066.4 965.7h4.4v4.4h-4.4zM995.4 757.6h4.4v4.4h-4.4zM801.5 1105.3h4.4v4.4h-4.4zM374.7 1262.6h4.4v4.4h-4.4zM764.2 938.7h4.4v4.4h-4.4zM660.7 1032.8h4.4v4.4h-4.4zM292.9 1270.0h4.4v4.4h-4.4zM594.1 1277.8h4.4v4.4h-4.4zM298.4 1300.1h4.4v4.4h-4.4zM872.0 1000.0h4.4v4.4h-4.4zM1135.6 901.3h4.4v4.4h-4.4zM831.2 1275.2h4.4v4.4h-4.4zM471.2 1164.9h4.4v4.4h-4.4zM883.5 865.3h4.4v4.4h-4.4zM1203.6 754.2h4.4v4.4h-4.4zM1224.4 938.6h4.4v4.4h-4.4zM442.1 1238.9h4.4v4.4h-4.4zM419.9 1182.9h4.4v4.4h-4.4zM920.6 1194.5h4.4v4.4h-4.4zM1036.8 818.6h4.4v4.4h-4.4zM579.7 1229.3h4.4v4.4h-4.4zM1148.1 990.8h4.4v4.4h-4.4zM807.6 960.7h4.4v4.4h-4.4zM1228.6 682.0h4.4v4.4h-4.4zM1079.7 774.6h4.4v4.4h-4.4zM261.0 1277.7h4.4v4.4h-4.4zM992.0 941.0h4.4v4.4h-4.4zM700.8 1092.6h4.4v4.4h-4.4zM1150.8 723.7h4.4v4.4h-4.4zM1306.1 872.0h4.4v4.4h-4.4zM887.3 1181.8h4.4v4.4h-4.4zM876.7 1232.9h4.4v4.4h-4.4zM1008.4 1132.5h4.4v4.4h-4.4zM374.4 1219.3h4.4v4.4h-4.4zM1264.3 612.2h4.4v4.4h-4.4zM755.5 1137.2h4.4v4.4h-4.4zM1062.1 1088.8h4.4v4.4h-4.4zM1077.0 997.7h4.4v4.4h-4.4zM1201.3 649.6h4.4v4.4h-4.4zM1108.5 756.5h4.4v4.4h-4.4zM1230.8 1002.7h4.4v4.4h-4.4zM438.5 1158.6h4.4v4.4h-4.4zM1120.7 1041.9h4.4v4.4h-4.4zM910.9 846.7h4.4v4.4h-4.4zM1195.4 905.2h4.4v4.4h-4.4zM474.4 1287.3h4.4v4.4h-4.4zM744.3 1274.0h4.4v4.4h-4.4zM833.8 1096.1h4.4v4.4h-4.4zM759.1 1039.2h4.4v4.4h-4.4zM730.6 958.5h4.4v4.4h-4.4zM816.3 905.1h4.4v4.4h-4.4zM811.6 1024.2h4.4v4.4h-4.4zM265.2 1230.7h4.4v4.4h-4.4zM596.1 1092.3h4.4v4.4h-4.4zM372.3 1187.2h4.4v4.4h-4.4zM1008.5 1034.8h4.4v4.4h-4.4zM557.9 1282.7h4.4v4.4h-4.4zM897.2 1131.2h4.4v4.4h-4.4zM1309.6 793.4h4.4v4.4h-4.4zM898.1 1034.6h4.4v4.4h-4.4zM1309.9 606.7h4.4v4.4h-4.4zM593.9 1192.3h4.4v4.4h-4.4zM644.3 1250.6h4.4v4.4h-4.4zM851.5 947.7h4.4v4.4h-4.4zM811.0 861.4h4.4v4.4h-4.4zM864.0 1035.8h4.4v4.4h-4.4zM1012.3 864.7h4.4v4.4h-4.4zM859.8 1148.7h4.4v4.4h-4.4zM915.5 781.8h4.4v4.4h-4.4zM1248.5 805.2h4.4v4.4h-4.4zM1249.9 915.5h4.4v4.4h-4.4zM810.5 1203.4h4.4v4.4h-4.4zM448.3 1199.2h4.4v4.4h-4.4zM972.0 1093.0h4.4v4.4h-4.4zM419.2 1216.3h4.4v4.4h-4.4zM556.0 1193.8h4.4v4.4h-4.4zM342.1 1201.5h4.4v4.4h-4.4zM438.4 1282.5h4.4v4.4h-4.4zM647.3 1156.2h4.4v4.4h-4.4zM909.2 906.2h4.4v4.4h-4.4zM1025.9 1098.0h4.4v4.4h-4.4zM327.6 1308.4h4.4v4.4h-4.4zM1036.6 1063.4h4.4v4.4h-4.4zM761.9 1306.1h4.4v4.4h-4.4zM913.0 1236.0h4.4v4.4h-4.4zM294.1 1239.3h4.4v4.4h-4.4zM1076.4 823.5h4.4v4.4h-4.4zM1214.1 865.2h4.4v4.4h-4.4zM584.1 1125.9h4.4v4.4h-4.4zM937.2 1029.5h4.4v4.4h-4.4zM979.6 1241.8h4.4v4.4h-4.4zM1099.0 1126.2h4.4v4.4h-4.4zM956.8 1163.8h4.4v4.4h-4.4zM1163.3 644.8h4.4v4.4h-4.4zM651.0 1283.8h4.4v4.4h-4.4zM1227.5 623.5h4.4v4.4h-4.4zM1055.5 893.5h4.4v4.4h-4.4zM1001.0 1001.1h4.4v4.4h-4.4zM1042.0 937.8h4.4v4.4h-4.4zM1310.7 682.9h4.4v4.4h-4.4zM1183.7 681.7h4.4v4.4h-4.4zM493.3 1227.5h4.4v4.4h-4.4zM702.0 1195.1h4.4v4.4h-4.4zM1262.6 949.9h4.4v4.4h-4.4zM865.7 1280.4h4.4v4.4h-4.4zM1089.1 682.3h4.4v4.4h-4.4zM244.0 1301.7h4.4v4.4h-4.4zM1093.7 1072.3h4.4v4.4h-4.4zM1036.5 1194.4h4.4v4.4h-4.4zM491.9 1311.5h4.4v4.4h-4.4zM707.3 1283.7h4.4v4.4h-4.4zM1304.8 759.6h4.4v4.4h-4.4zM1158.0 1086.5h4.4v4.4h-4.4zM1309.8 836.3h4.4v4.4h-4.4z" fill="#808080"/>
<path d="M1187.8 610.7 L1196.7 616.7 L1230.0 651.0 L1241.0 655.6 L1331.0 635.6" fill="none" stroke="#0000ff" stroke-width="3.1" stroke-linejoin="round" />
<path d="M1184.0 616.0 L1227.8 658.5 L1241.0 663.8 L1331.0 645.6" fill="none" stroke="#0000ff" stroke-width="3.1" stroke-linejoin="round" />
<path d="M1186.0 613.5 L1229.0 654.8 L1241.0 659.7 L1331.0 640.6" fill="none" stroke="#0000ff" stroke-width="2.8" stroke-dasharray="9 5" stroke-linejoin="round" />
<path d="M882.0 765.6 C882.8 767.3 884.2 772.5 886.7 775.6 C889.2 778.7 892.1 782.3 896.7 784.4 C901.3 786.5 908.9 787.8 914.4 788.4 C919.9 789.0 924.8 788.1 930.0 787.8 C935.2 787.5 940.1 788.7 945.6 786.7 C951.1 784.7 958.5 779.3 963.3 775.6 C968.1 771.9 970.3 768.1 974.4 764.4 C978.5 760.7 985.6 755.1 987.8 753.3" fill="none" stroke="#ff0000" stroke-width="3" stroke-linejoin="round" />
<path d="M948.0 840.0 C948.3 836.7 948.9 826.8 950.0 820.0 C951.1 813.2 952.2 804.9 954.4 799.0 C956.6 793.1 958.1 790.9 963.3 784.4 C968.5 777.9 978.2 766.7 985.6 760.0 C993.0 753.3 999.7 748.5 1007.8 744.4 C1015.9 740.3 1025.9 738.1 1034.4 735.6 C1042.9 733.1 1051.1 730.9 1058.9 729.3 C1066.7 727.7 1077.3 726.7 1081.0 726.2" fill="none" stroke="#ff0000" stroke-width="3" stroke-linejoin="round" />
<path d="M1099.0 724.0 L1132.0 719.0" fill="none" stroke="#ff0000" stroke-width="3" stroke-linejoin="round" />
<path d="M1147.8 716.0 L1181.0 708.4" fill="none" stroke="#ff0000" stroke-width="3" stroke-linejoin="round" />
<path d="M1196.7 703.3 L1230.0 693.3" fill="none" stroke="#ff0000" stroke-width="3" stroke-linejoin="round" />
<path d="M1245.6 686.7 L1281.0 673.3" fill="none" stroke="#ff0000" stroke-width="3" stroke-linejoin="round" />
<path d="M1296.7 667.0 L1331.0 655.6" fill="none" stroke="#ff0000" stroke-width="3" stroke-linejoin="round" />
<path d="M967.8 840.0 C968.5 837.0 969.2 829.0 972.2 822.0 C975.2 815.0 980.4 804.8 985.6 797.8 C990.8 790.8 997.0 785.2 1003.3 780.0 C1009.6 774.8 1015.2 770.8 1023.3 766.7 C1031.4 762.6 1041.2 758.6 1052.0 755.6 C1062.8 752.6 1081.8 750.0 1087.8 748.9" fill="none" stroke="#ff0000" stroke-width="3" stroke-linejoin="round" />
<path d="M1103.3 747.8 L1133.3 742.2" fill="none" stroke="#ff0000" stroke-width="3" stroke-linejoin="round" />
<path d="M1150.0 737.8 L1187.8 729.0" fill="none" stroke="#ff0000" stroke-width="3" stroke-linejoin="round" />
<path d="M1203.3 723.3 L1237.8 711.0" fill="none" stroke="#ff0000" stroke-width="3" stroke-linejoin="round" />
<path d="M1254.4 704.4 L1287.8 693.3" fill="none" stroke="#ff0000" stroke-width="3" stroke-linejoin="round" />
<path d="M1303.3 687.8 L1331.0 679.0" fill="none" stroke="#ff0000" stroke-width="3" stroke-linejoin="round" />
<path d="M855.6 776.7 C858.8 778.9 875.9 792.2 883.3 795.6 C890.7 799.0 912.7 803.9 918.9 805.6 C925.1 807.3 933.3 808.7 936.7 810.0 C940.1 811.3 947.1 813.4 947.8 816.7 C948.5 820.0 943.6 835.5 943.0 838.0" fill="none" stroke="#ff0000" stroke-width="3" stroke-linejoin="round" />
<path d="M852.0 751.0 C855.0 754.7 863.3 766.7 870.0 773.0 C876.7 779.3 883.2 785.0 892.0 789.0 C900.8 793.0 912.8 794.7 923.0 796.7 C933.2 798.7 948.0 800.3 953.0 801.0" fill="none" stroke="#ff8000" stroke-width="4.6" stroke-linejoin="round" stroke-linecap="round"/>
<path d="M953.0 840.0 C954.7 835.5 958.3 821.9 963.0 813.0 C967.7 804.1 973.5 795.2 981.0 786.7 C988.5 778.2 999.0 768.3 1007.8 762.0 C1016.6 755.7 1023.0 752.7 1034.0 749.0 C1045.0 745.3 1058.0 743.0 1074.0 740.0 C1090.0 737.0 1115.2 733.8 1130.0 731.0 C1144.8 728.2 1157.5 724.3 1163.0 723.0" fill="none" stroke="#ff8000" stroke-width="4.6" stroke-linejoin="round" stroke-linecap="round"/>
<path d="M1190.0 717.0 L1263.0 691.0" fill="none" stroke="#ff8000" stroke-width="4.6" stroke-linejoin="round" stroke-linecap="round"/>
<path d="M1289.0 681.0 L1331.0 666.7" fill="none" stroke="#ff8000" stroke-width="4.6" stroke-linejoin="round" stroke-linecap="round"/>
<path d="M943.4 817.9 C942.6 823.1 939.9 836.1 938.8 848.9 C937.6 861.7 935.7 879.5 936.5 894.8 C937.3 910.1 939.6 923.5 943.4 940.7 C947.2 957.9 954.5 979.6 959.5 998.0 C964.5 1016.4 970.5 1036.3 973.2 1051.0 C975.9 1065.7 975.1 1080.2 975.5 1086.0" fill="none" stroke="#ff0000" stroke-width="3" stroke-dasharray="17 7" stroke-linejoin="round" />
<path d="M953.0 838.0 C952.7 839.8 952.0 841.4 951.4 848.9 C950.8 856.4 948.9 870.3 949.1 883.3 C949.3 896.3 950.1 911.3 952.6 927.0 C955.1 942.7 959.4 959.9 964.0 977.5 C968.6 995.1 976.4 1017.7 980.0 1032.6 C983.6 1047.5 984.9 1058.1 985.9 1067.0 C986.9 1075.9 985.9 1082.8 985.9 1086.0" fill="none" stroke="#ff8000" stroke-width="4.6" stroke-linejoin="round" />
<path d="M966.0 842.0 C965.7 843.1 964.9 844.9 964.0 848.9 C963.1 852.9 961.2 863.1 960.6 866.0" fill="none" stroke="#ff0000" stroke-width="3" stroke-linejoin="round" />
<path d="M960.0 878.0 C959.9 882.7 958.4 895.8 959.5 906.3 C960.6 916.8 963.4 927.3 966.4 940.7 C969.4 954.1 974.4 973.3 977.8 986.7 C981.2 1000.1 983.9 1008.4 987.0 1021.0 C990.1 1033.6 994.3 1051.6 996.2 1062.4 C998.1 1073.2 998.1 1082.1 998.5 1086.0" fill="none" stroke="#ff0000" stroke-width="3" stroke-dasharray="17 7" stroke-linejoin="round" />
<path d="M932.0 835.0 L922.7 884.5 L927.3 917.8 L941.0 977.5 L961.8 1032.6 L967.5 1086.0" fill="none" stroke="#0000ff" stroke-width="3" stroke-linejoin="round" />
<path d="M935.4 835.6 L926.2 884.6 L930.7 917.2 L944.4 976.5 L965.2 1031.8 L971.0 1085.6" fill="none" stroke="#0000ff" stroke-width="2.8" stroke-dasharray="6 4" stroke-linejoin="round" />
<path d="M929.0 835.5 L936.0 835.5" fill="none" stroke="#0000ff" stroke-width="3" stroke-linejoin="round" />
<path d="M866.5 797.2 L812.5 853.5 L757.4 962.5 L748.2 998.0 L766.6 1086.0" fill="none" stroke="#0000ff" stroke-width="3.1" stroke-linejoin="round" />
<path d="M879.0 804.0 L878.7 811.0 L835.5 845.4 L817.0 865.0 L768.9 963.7 L757.4 995.8 L774.6 1086.0" fill="none" stroke="#0000ff" stroke-width="3.1" stroke-linejoin="round" />
<path d="M871.0 806.4 L817.0 854.6 L762.0 966.0 L752.8 997.0 L770.5 1086.0" fill="none" stroke="#0000ff" stroke-width="2.8" stroke-dasharray="7 5" stroke-linejoin="round" />
<path d="M866.5 797.2 L879.0 804.0" fill="none" stroke="#0000ff" stroke-width="3.1" stroke-linejoin="round" />
<path d="M881.4 808.7 L929.6 831.7" fill="none" stroke="#008080" stroke-width="3" stroke-dasharray="11 7" stroke-linejoin="round" />
<path d="M1331.0 621.0 L1059.0 725.0 L941.0 815.5 L961.8 899.4 L983.6 982.0 L993.9 1057.8 L997.4 1086.0" fill="none" stroke="#000080" stroke-width="2.8" stroke-linejoin="round" />
<path d="M1331.0 689.0 L1303.0 695.5 L1146.7 749.0 L1102.0 804.4 L1058.2 858.0 L983.6 982.0 L936.5 1057.8 L918.0 1086.0" fill="none" stroke="#000080" stroke-width="2.8" stroke-linejoin="round" />
<circle cx="1323" cy="624.4" r="3.2" fill="#000080"/>
<circle cx="1142" cy="693" r="3.2" fill="#000080"/>
<circle cx="1000" cy="771" r="3.2" fill="#000080"/>
<circle cx="961.8" cy="899.4" r="3.2" fill="#000080"/>
<circle cx="994" cy="1056.7" r="3.2" fill="#000080"/>
<circle cx="1225.5" cy="723" r="3.2" fill="#000080"/>
<circle cx="1102" cy="804" r="3.2" fill="#000080"/>
<circle cx="1020.3" cy="920" r="3.2" fill="#000080"/>
<circle cx="936.5" cy="1057.8" r="3.2" fill="#000080"/>
<path d="M1075.8 884.0 L1081.2 887.2 L1083.4 902.2 L1089.8 917.8 L1080.1 953.2 L1086.1 978.5 L1081.8 993.5 L1063.0 1002.3 L1051.7 1000.5 L1040.4 985.5 L1034.0 944.1 L1036.1 921.6 L1040.9 909.2 L1051.1 903.3 L1067.3 891.5Z" fill="none" stroke="#ff0000" stroke-width="2.9" stroke-linejoin="round" />
<path d="M1080.1 888.3 L1070.5 891.5 L1064.6 901.1 L1064.0 909.2 L1068.9 921.6 L1067.3 928.5 L1063.5 932.8" fill="none" stroke="#ff0000" stroke-width="2.8" stroke-linejoin="round" />
<path d="M1078.5 889.9 L1075.3 904.9 L1082.8 917.8 L1076.9 924.8 L1075.3 932.3 L1079.6 940.3 L1071.6 953.8" fill="none" stroke="#ff0000" stroke-width="2.8" stroke-linejoin="round" />
<path d="M1038.3 920.5 L1045.8 910.8 L1057.1 909.7 L1059.2 918.9 L1056.5 928.5 L1057.6 934.4" fill="none" stroke="#ff0000" stroke-width="2.8" stroke-linejoin="round" />
<path d="M1039.3 919.4 L1046.8 921.0 L1050.1 926.4 L1041.5 933.9" fill="none" stroke="#ff0000" stroke-width="2.8" stroke-linejoin="round" />
<path d="M1047.4 953.2 L1046.3 937.7 L1051.7 928.5 L1054.9 943.0" fill="none" stroke="#ff0000" stroke-width="2.8" stroke-linejoin="round" />
<path d="M1075.8 954.8 L1069.4 961.8 L1069.4 966.1" fill="none" stroke="#ff0000" stroke-width="2.8" stroke-linejoin="round" />
<path d="M1045.8 965.6 L1045.8 971.0 L1048.5 975.8" fill="none" stroke="#ff0000" stroke-width="2.8" stroke-linejoin="round" />
<path d="M1054.9 986.5 L1056.5 988.7 L1067.8 982.8 L1068.3 977.4" fill="none" stroke="#ff0000" stroke-width="2.8" stroke-linejoin="round" />
<text x="1103.500" y="937.500" font-family="Liberation Sans, sans-serif" font-style="italic" font-size="35.500" fill="#000" textLength="240" lengthAdjust="spacingAndGlyphs">Mjölnarbacken</text>
<text x="306" y="1094" font-family="Liberation Sans, sans-serif" font-size="35.500" fill="#000" textLength="156" lengthAdjust="spacingAndGlyphs">Grankulla</text>
<path d="M203.4 1275.4 L222.4 1273.2" fill="none" stroke="#ff0000" stroke-width="3" stroke-linejoin="round" />
<path d="M238.5 1271.6 L256.1 1269.7" fill="none" stroke="#ff0000" stroke-width="3" stroke-linejoin="round" />
<path d="M281.5 1268.3 L299.8 1266.2" fill="none" stroke="#ff0000" stroke-width="3" stroke-linejoin="round" />
<path d="M339.9 1261.3 L381.4 1253.5" fill="none" stroke="#ff0000" stroke-width="3" stroke-linejoin="round" />
<path d="M401.1 1249.3 L418.0 1244.4 L479.9 1219.0 L480.0 1219.0" fill="none" stroke="#ff0000" stroke-width="3" stroke-linejoin="round" />
<path d="M494.0 1212.0 L520.0 1199.4" fill="none" stroke="#ff0000" stroke-width="3" stroke-linejoin="round" />
<path d="M209.7 1295.5 L228.0 1293.0" fill="none" stroke="#ff0000" stroke-width="3" stroke-linejoin="round" />
<path d="M244.9 1290.6 L266.0 1288.7" fill="none" stroke="#ff0000" stroke-width="3" stroke-linejoin="round" />
<path d="M282.9 1287.6 L325.1 1283.4" fill="none" stroke="#ff0000" stroke-width="3" stroke-linejoin="round" />
<path d="M341.3 1281.0 L358.9 1278.2" fill="none" stroke="#ff0000" stroke-width="3" stroke-linejoin="round" />
<path d="M366.6 1276.8 L384.9 1273.2" fill="none" stroke="#ff0000" stroke-width="3" stroke-linejoin="round" />
<path d="M400.4 1269.7 L419.4 1265.5" fill="none" stroke="#ff0000" stroke-width="3" stroke-linejoin="round" />
<path d="M424.3 1264.1 L446.1 1254.2 L470.7 1245.1 L487.6 1236.0" fill="none" stroke="#ff0000" stroke-width="3" stroke-linejoin="round" />
<path d="M502.4 1226.8 L520.0 1218.4" fill="none" stroke="#ff0000" stroke-width="3" stroke-linejoin="round" />
<path d="M230.1 1281.4 L305.4 1275.4" fill="none" stroke="#ff8000" stroke-width="4.6" stroke-linejoin="round" stroke-linecap="round"/>
<path d="M330.0 1273.2 L363.1 1266.5" fill="none" stroke="#ff8000" stroke-width="4.6" stroke-linejoin="round" stroke-linecap="round"/>
<path d="M387.7 1262.0 L420.8 1255.0 L465.8 1235.0" fill="none" stroke="#ff8000" stroke-width="4.6" stroke-linejoin="round" stroke-linecap="round"/>
<path d="M488.3 1225.4 L520.0 1209.2" fill="none" stroke="#ff8000" stroke-width="4.6" stroke-linejoin="round" stroke-linecap="round"/>
<path d="M494.0 1062.0 L452.9 1200.0 L472.2 1274.0 L520.0 1265.5" fill="none" stroke="#000080" stroke-width="2.8" stroke-linejoin="round" />
<path d="M219.6 1297.9 L472.2 1274.0" fill="none" stroke="#000080" stroke-width="2.8" stroke-linejoin="round" />
<path d="M353.0 1315.0 L472.2 1274.0" fill="none" stroke="#000080" stroke-width="2.8" stroke-linejoin="round" />
<circle cx="292.7" cy="1290.8" r="3.2" fill="#000080"/>
<circle cx="439.8" cy="1274.6" r="3.2" fill="#000080"/>
<circle cx="412.4" cy="1294.4" r="3.2" fill="#000080"/>
<circle cx="473.6" cy="1131.8" r="3.2" fill="#000080"/>
<circle cx="463" cy="1237.4" r="3.2" fill="#000080"/>
<path d="M513.0 1190.0 L459.0 1221.0" fill="none" stroke="#0000ff" stroke-width="2.8" stroke-dasharray="9 10" stroke-linejoin="round" />
<path d="M238.6 1266.2 L246.3 1265.5 L266.0 1264.1 L289.6 1262.7 L308.2 1261.3 L327.9 1259.9 L358.9 1254.9 L395.0 1246.2 L423.6 1237.8 L437.7 1226.8 L434.9 1209.2 L429.2 1199.4" fill="none" stroke="#008000" stroke-width="2.8" stroke-linejoin="round" />
<path d="M454.6 1219.8 L467.0 1212.7 L493.7 1198.7 L510.9 1191.6" fill="none" stroke="#008000" stroke-width="2.8" stroke-linejoin="round" />
<circle cx="246.3" cy="1265.5" r="4.800" fill="#fff" stroke="#008000" stroke-width="2.600"/><path d="M246.3 1262.9 L247.9 1267.7 L243.8 1264.7 H248.8 L244.70000000000002 1267.7Z" fill="#008000"/>
<circle cx="266" cy="1264.1" r="4.800" fill="#fff" stroke="#008000" stroke-width="2.600"/><path d="M266 1261.5 L267.6 1266.3 L263.5 1263.3 H268.5 L264.4 1266.3Z" fill="#008000"/>
<circle cx="289.6" cy="1262.7" r="4.800" fill="#fff" stroke="#008000" stroke-width="2.600"/><path d="M289.6 1260.1000000000001 L291.20000000000005 1264.9 L287.1 1261.9 H292.1 L288.0 1264.9Z" fill="#008000"/>
<circle cx="308.2" cy="1261.3" r="4.800" fill="#fff" stroke="#008000" stroke-width="2.600"/><path d="M308.2 1258.7 L309.8 1263.5 L305.7 1260.5 H310.7 L306.59999999999997 1263.5Z" fill="#008000"/>
<circle cx="327.9" cy="1259.9" r="4.800" fill="#fff" stroke="#008000" stroke-width="2.600"/><path d="M327.9 1257.3000000000002 L329.5 1262.1000000000001 L325.4 1259.1000000000001 H330.4 L326.29999999999995 1262.1000000000001Z" fill="#008000"/>
<circle cx="358.9" cy="1254.9" r="4.800" fill="#fff" stroke="#008000" stroke-width="2.600"/><path d="M358.9 1252.3000000000002 L360.5 1257.1000000000001 L356.4 1254.1000000000001 H361.4 L357.29999999999995 1257.1000000000001Z" fill="#008000"/>
<circle cx="395" cy="1246.2" r="4.800" fill="#fff" stroke="#008000" stroke-width="2.600"/><path d="M395 1243.6000000000001 L396.6 1248.4 L392.5 1245.4 H397.5 L393.4 1248.4Z" fill="#008000"/>
<circle cx="423.6" cy="1237.8" r="4.800" fill="#fff" stroke="#008000" stroke-width="2.600"/><path d="M423.6 1235.2 L425.20000000000005 1240.0 L421.1 1237.0 H426.1 L422.0 1240.0Z" fill="#008000"/>
<circle cx="437.7" cy="1226.8" r="4.800" fill="#fff" stroke="#008000" stroke-width="2.600"/><path d="M437.7 1224.2 L439.3 1229.0 L435.2 1226.0 H440.2 L436.09999999999997 1229.0Z" fill="#008000"/>
<circle cx="434.9" cy="1209.2" r="4.800" fill="#fff" stroke="#008000" stroke-width="2.600"/><path d="M434.9 1206.6000000000001 L436.5 1211.4 L432.4 1208.4 H437.4 L433.29999999999995 1211.4Z" fill="#008000"/>
<circle cx="467" cy="1212.7" r="4.800" fill="#fff" stroke="#008000" stroke-width="2.600"/><path d="M467 1210.1000000000001 L468.6 1214.9 L464.5 1211.9 H469.5 L465.4 1214.9Z" fill="#008000"/>
<circle cx="493.7" cy="1198.7" r="4.800" fill="#fff" stroke="#008000" stroke-width="2.600"/><path d="M493.7 1196.1000000000001 L495.3 1200.9 L491.2 1197.9 H496.2 L492.09999999999997 1200.9Z" fill="#008000"/>
<path d="M197.7 1274.0 C199.5 1270.3 203.7 1259.3 208.3 1252.1 C212.9 1244.9 218.9 1237.2 225.2 1231.0 C231.5 1224.8 240.4 1218.7 246.3 1214.8 C252.2 1210.9 258.0 1209.0 260.4 1207.8" fill="none" stroke="#0080c0" stroke-width="3" stroke-dasharray="13 3 3 3" stroke-linejoin="round" />
<path d="M216.7 1269.7 C217.6 1266.8 219.8 1257.2 222.4 1252.1 C225.0 1246.9 227.3 1242.3 232.2 1238.8 C237.1 1235.3 248.6 1232.3 251.9 1231.0" fill="none" stroke="#0080c0" stroke-width="3" stroke-dasharray="13 3 3 3" stroke-linejoin="round" />
<path d="M396.9 1167.7 C399.9 1169.6 409.3 1174.1 415.2 1179.0 C421.1 1183.9 427.1 1190.9 432.0 1197.2 C436.9 1203.5 442.1 1212.1 444.7 1217.0 C447.3 1221.9 447.4 1224.2 447.5 1226.8 C447.6 1229.4 445.8 1231.5 445.4 1232.4" fill="none" stroke="#0080c0" stroke-width="3" stroke-dasharray="13 3 3 3" stroke-linejoin="round" />
<path d="M429.2 1176.1 C431.3 1179.1 438.4 1188.5 441.9 1194.4 C445.4 1200.3 447.9 1206.6 450.3 1211.3 C452.7 1216.0 455.1 1220.7 456.0 1222.6" fill="none" stroke="#0080c0" stroke-width="2" stroke-dasharray="9 3 2 3" stroke-linejoin="round" />
<defs><pattern id="ht" width="9" height="9" patternUnits="userSpaceOnUse" patternTransform="rotate(-42)"><rect x="0" y="0" width="9" height="2.800" fill="#008080"/></pattern><pattern id="hb" width="9" height="9" patternUnits="userSpaceOnUse" patternTransform="rotate(49)"><rect x="0" y="0" width="9" height="2.800" fill="#0080c0"/></pattern></defs>
<path d="M351.1 1133.2 L358.9 1132.2 L360.0 1136.7 L367.6 1136.0 L371.8 1162.8 L356.8 1165.2Z" fill="url(#ht)" stroke="#008080" stroke-width="3" stroke-linejoin="miter"/>
<path d="M285.7 1195.1 L297.7 1192.7 L301.9 1214.1 L290.2 1217.0Z" fill="url(#ht)" stroke="#008080" stroke-width="3" stroke-linejoin="miter"/>
<path d="M239.3 1237.4 L268.8 1233.1 L269.5 1226.8 L298.1 1222.3 L300.5 1246.2 L261.1 1250.7 L261.8 1262.0 L242.8 1263.4Z" fill="url(#ht)" stroke="#008080" stroke-width="3" stroke-linejoin="miter"/>
<path d="M410.9 1150.8 L428.5 1136.0 L452.5 1164.2 L434.9 1179.0Z" fill="url(#hb)" stroke="#0080c0" stroke-width="3" stroke-linejoin="miter"/>
<path d="M414.5 1154.0 L437.0 1181.0" fill="none" stroke="#0080c0" stroke-width="2.4" stroke-linejoin="round" />
<path d="M335.0 1210.6 L351.1 1207.1 L355.4 1218.4 L369.4 1214.4 L372.9 1222.6 L382.1 1220.5 L386.3 1239.5 L342.7 1248.6Z" fill="url(#hb)" stroke="#0080c0" stroke-width="3" stroke-linejoin="miter"/>
<circle cx="351.800" cy="1207.500" r="1.600" fill="#000"/>
<path d="M459.5 1126.6 L522.0 1177.7" fill="none" stroke="#0000ff" stroke-width="3" stroke-linejoin="round" />
<path d="M456.0 1131.8 L514.0 1174.0" fill="none" stroke="#0000ff" stroke-width="2.8" stroke-dasharray="10 8" stroke-linejoin="round" />
<path d="M448.9 1142.1 L511.6 1187.1" fill="none" stroke="#0000ff" stroke-width="3" stroke-linejoin="round" />
<circle cx="466.500" cy="1164.900" r="2.400" fill="none" stroke="#ff0000" stroke-width="2.200"/><circle cx="475.200" cy="1167" r="2.400" fill="none" stroke="#ff0000" stroke-width="2.200"/>
<path d="M498.200 1183.200 L515.100 1167 L519.300 1171.900 L501.700 1186Z" fill="none" stroke="#000" stroke-width="2.600"/>
<path d="M221.7 1307.1 L230.7 1316.1 M230.7 1307.1 L221.7 1316.1" stroke="#ff8000" stroke-width="2.200"/>
<path d="M454.0 1201.2 L463.0 1210.2 M463.0 1201.2 L454.0 1210.2" stroke="#ff8000" stroke-width="2.200"/>
<path d="M571.0 1053.7 L559.3 1084.0" fill="none" stroke="#ff0000" stroke-width="3" stroke-linejoin="round" />
<path d="M575.8 1056.0 L565.0 1084.0" fill="none" stroke="#ff8000" stroke-width="3.6" stroke-linejoin="round" />
<path d="M583.0 1058.4 L571.0 1084.0" fill="none" stroke="#ff0000" stroke-width="3" stroke-linejoin="round" />
<path d="M590.0 1060.8 L580.6 1084.0" fill="none" stroke="#0000ff" stroke-width="2.8" stroke-dasharray="8 4" stroke-linejoin="round" />
<path d="M765.0 1323.0 L760.0 1350.0" fill="none" stroke="#0000ff" stroke-width="3.1" stroke-dasharray="8 5" stroke-linejoin="round" />
<path d="M772.0 1323.0 L767.0 1350.0" fill="none" stroke="#0000ff" stroke-width="3.1" stroke-linejoin="round" />
<path d="M795.0 1320.0 L785.0 1350.0" fill="none" stroke="#000080" stroke-width="2.8" stroke-linejoin="round" />
</svg>
<div class="a" style="left:0px;top:0px;width:2105px;height:39px;background:#0078d7;"></div>
<svg style="left:3px;top:5px" width="28" height="28" viewBox="0 0 28 28">
<polygon points="27,1 27,27 1,27" fill="#e8e8e8" stroke="#222" stroke-width="1"/>
<path d="M27 27 L9 19 M27 27 L14 14 M27 27 L19 9 M27 27 L27 1" stroke="#333" stroke-width="0.8" fill="none"/>
<path d="M10 27 A17 17 0 0 1 27 10 M16 27 A11 11 0 0 1 27 16" stroke="#333" stroke-width="0.8" fill="none"/>
<text x="-2" y="16.500" font-family="Liberation Sans, sans-serif" font-size="15" font-weight="bold" fill="#00e8f0" stroke="#023" stroke-width="1.800" paint-order="stroke" transform="rotate(-45 8 12)">3D</text>
</svg>
<span class="t" style="top:7.07px;font-size:20px;line-height:28px;color:#fff;left:36px;transform-origin:0 50%;transform:scaleX(1.0447);">Pernaja.mm1.tdw* - 3D-Win - Käyttöoikeus: Novatron Oy</span>
<div class="a" style="left:0px;top:39px;width:2105px;height:33px;background:#fff;"></div>
<div class="a" style="left:0px;top:39px;width:105px;height:33px;background:#cce8ff;border:1px solid #99d1ff;"></div>
<span class="t" style="top:42.57px;font-size:20px;line-height:28px;color:#000;left:13px;transform-origin:0 50%;transform:scaleX(1.0399);">Tiedosto</span>
<span class="t" style="top:42.57px;font-size:20px;line-height:28px;color:#000;left:118px;transform-origin:0 50%;transform:scaleX(1.0266);">Hakemisto</span>
<span class="t" style="top:42.57px;font-size:20px;line-height:28px;color:#000;left:242px;transform-origin:0 50%;transform:scaleX(1.0195);">Zoomaus</span>
<span class="t" style="top:42.57px;font-size:20px;line-height:28px;color:#000;left:354px;transform-origin:0 50%;transform:scaleX(1.0540);">Editointi</span>
<span class="t" style="top:42.57px;font-size:20px;line-height:28px;color:#000;left:456px;transform-origin:0 50%;transform:scaleX(0.9856);">Laskenta</span>
<span class="t" style="top:42.57px;font-size:20px;line-height:28px;color:#000;left:563px;transform-origin:0 50%;transform:scaleX(1.0496);">Maastomalli</span>
<span class="t" style="top:42.57px;font-size:20px;line-height:28px;color:#000;left:702px;transform-origin:0 50%;transform:scaleX(1.0346);">Tiegeometria</span>
<span class="t" style="top:42.57px;font-size:20px;line-height:28px;color:#000;left:849px;transform-origin:0 50%;transform:scaleX(0.9880);">Kairaus</span>
<span class="t" style="top:42.57px;font-size:20px;line-height:28px;color:#000;left:942px;transform-origin:0 50%;transform:scaleX(1.0247);">Asetukset</span>
<span class="t" style="top:42.57px;font-size:20px;line-height:28px;color:#000;left:1058px;transform-origin:0 50%;transform:scaleX(1.0203);">Työkalut</span>
<span class="t" style="top:42.57px;font-size:20px;line-height:28px;color:#000;left:1161px;transform-origin:0 50%;transform:scaleX(1.0180);">Ikkuna</span>
<span class="t" style="top:42.57px;font-size:20px;line-height:28px;color:#000;left:1248px;transform-origin:0 50%;transform:scaleX(1.0178);">Ohje</span>
<div class="a" style="left:0px;top:72px;width:2105px;height:1px;background:#e8e8e8;"></div>
<div class="a" style="left:0px;top:73px;width:2105px;height:68px;background:#fff;"></div>
<div class="a" style="left:0px;top:141px;width:2105px;height:1px;background:#000;"></div>
<div class="a" style="left:0px;top:141px;width:1px;height:1209px;background:#000;"></div>
<svg style="left:0;top:0" width="2105" height="145" viewBox="0 0 2105 145">
<g transform="translate(848,85)" shape-rendering="crispEdges">
<path d="M2 0H42V2H44V35H42V37H2V35H0V2H2Z" fill="#a0a0a0"/><rect x="4" y="4" width="36" height="29" fill="#fff"/>
<rect x="9" y="37" width="26" height="4" fill="#a0a0a0"/><rect x="4" y="41" width="36" height="3" fill="#a0a0a0"/></g>
<g transform="translate(848,85)"><g><path d="M20.800 15.400 L23 15.400 V8 H32 V16.600 L33.800 16.800 V24.400 L30.700 25.300 L28.900 28.900 L26.200 30.200 L8.100 29.600 V28.200 L17.200 27.600 L19 22.600Z" fill="#000"/>
<path d="M21.700 16.800 H28 L27 20.800 L24.400 21.700 L27 23.500 L22.600 26.200 L19 28 L18 27 L20.800 22.600Z" fill="#ffff00"/><rect x="24.300" y="10.300" width="4.200" height="4.200" fill="#fff"/></g></g>
<g transform="translate(910,85)" shape-rendering="crispEdges">
<path d="M2 0H42V2H44V35H42V37H2V35H0V2H2Z" fill="#a0a0a0"/><rect x="4" y="4" width="36" height="29" fill="#fff"/>
<rect x="9" y="37" width="26" height="4" fill="#a0a0a0"/><rect x="4" y="41" width="36" height="3" fill="#a0a0a0"/></g>
<g transform="translate(910,85)"><path d="M8 19 L18 10 V15 H36 V23 H18 V28Z" fill="#fff" stroke="#000" stroke-width="1.8"/></g>
<g transform="translate(972,85)" shape-rendering="crispEdges">
<path d="M2 0H42V2H44V35H42V37H2V35H0V2H2Z" fill="#a0a0a0"/><rect x="4" y="4" width="36" height="29" fill="#fff"/>
<rect x="9" y="37" width="26" height="4" fill="#a0a0a0"/><rect x="4" y="41" width="36" height="3" fill="#a0a0a0"/></g>
<g transform="translate(972,85)"><path d="M36 19 L26 10 V15 H8 V23 H26 V28Z" fill="#fff" stroke="#000" stroke-width="1.8"/></g>
<g transform="translate(1034,85)" shape-rendering="crispEdges">
<path d="M2 0H42V2H44V35H42V37H2V35H0V2H2Z" fill="#a0a0a0"/><rect x="4" y="4" width="36" height="29" fill="#fff"/>
<rect x="9" y="37" width="26" height="4" fill="#a0a0a0"/><rect x="4" y="41" width="36" height="3" fill="#a0a0a0"/></g>
<g transform="translate(1034,85)"><circle cx="19" cy="17.500" r="9.500" fill="#fff" stroke="#000" stroke-width="1.800"/><path d="M13 17.500 H25" stroke="#000" stroke-width="3.600"/><path d="M19 11.500 V23.500" stroke="#000" stroke-width="3.600"/><path d="M26 24.500 L32 30.500" stroke="#000" stroke-width="3.600"/></g>
<g transform="translate(1096,85)" shape-rendering="crispEdges">
<path d="M2 0H42V2H44V35H42V37H2V35H0V2H2Z" fill="#a0a0a0"/><rect x="4" y="4" width="36" height="29" fill="#fff"/>
<rect x="9" y="37" width="26" height="4" fill="#a0a0a0"/><rect x="4" y="41" width="36" height="3" fill="#a0a0a0"/></g>
<g transform="translate(1096,85)"><circle cx="19" cy="17.500" r="9.500" fill="#fff" stroke="#000" stroke-width="1.800"/><path d="M13 17.500 H25" stroke="#000" stroke-width="3.600"/><path d="M26 24.500 L32 30.500" stroke="#000" stroke-width="3.600"/></g>
<rect x="1154.0" y="78" width="1" height="58" fill="#a0a0a0"/>
<rect x="1288.0" y="78" width="1" height="58" fill="#a0a0a0"/>
<rect x="1608.0" y="78" width="1" height="58" fill="#a0a0a0"/>
<rect x="1742.0" y="78" width="1" height="58" fill="#a0a0a0"/>
<path d="M1174 100 L1184 91 V97 H1196 Q1204 97 1204 105 V113 Q1204 121 1196 121 H1180 V115 H1194 Q1198 115 1198 112 V106 Q1198 103 1194 103 H1184 V109Z" fill="#ff00ff"/>
<path d="M1268 100 L1258 91 V97 H1246 Q1238 97 1238 105 V113 Q1238 121 1246 121 H1262 V115 H1248 Q1244 115 1244 112 V106 Q1244 103 1248 103 H1258 V109Z" fill="#ff00ff"/>
<path d="M1310.0 113 H1326.0 M1318 105.0 V121.0" stroke="#ff0000" stroke-width="4.6" shape-rendering="crispEdges"/>
<text x="1326.500" y="115" font-family="Liberation Sans, sans-serif" font-weight="bold" font-size="36" fill="#000" textLength="17" lengthAdjust="spacingAndGlyphs">?</text>
<path d="M1378.0 107 H1394.0 M1386 99.0 V115.0" stroke="#ff0000" stroke-width="4.6" shape-rendering="crispEdges"/>
<path d="M1430.0 97 H1446.0 M1438 89.0 V105.0" stroke="#ff0000" stroke-width="4.6" shape-rendering="crispEdges"/>
<path d="M1450.0 107 H1466.0 M1458 99.0 V115.0" stroke="#ff0000" stroke-width="4.6" shape-rendering="crispEdges"/>
<path d="M1436.0 119 H1452.0 M1444 111.0 V127.0" stroke="#ff0000" stroke-width="4.6" shape-rendering="crispEdges"/>
<path d="M1490.500 87.500 L1504 93.500" stroke="#00ffff" stroke-width="3.500"/><path d="M1504.500 93 L1505.500 110" stroke="#ff00ff" stroke-width="3.800"/><path d="M1508 116 L1530 125.500" stroke="#00ffff" stroke-width="3.500"/>
<path d="M1499.5 115 H1511.5 M1505.5 109.0 V121.0" stroke="#ff0000" stroke-width="3.6" shape-rendering="crispEdges"/>
<text x="1551.500" y="119" font-family="Liberation Mono, monospace" font-weight="bold" font-size="30" fill="#000" stroke="#000" stroke-width="1" textLength="41" lengthAdjust="spacingAndGlyphs">TXT</text>
<path d="M1622 124 H1664 M1625 121 V127 M1661 121 V127" stroke="#000" stroke-width="1.800"/>
<path d="M1625 122.500 L1643 106" stroke="#ff0000" stroke-width="1.600"/><path d="M1643 106 L1658 92" stroke="#909090" stroke-width="1.600"/>
<path d="M1656 90.500 H1662 M1659 87.500 V93.500" stroke="#000" stroke-width="1.800"/>
<path d="M1643 107 L1660 122.500 M1641 109 V123" stroke="#00ff00" stroke-width="1.500"/>
<path d="M1650 101 Q1660 108 1661 122" stroke="#ff00ff" stroke-width="1.600" fill="none" stroke-dasharray="3 2"/>
<text x="1626" y="108.500" font-family="Liberation Mono, monospace" font-size="14" fill="#ff0000">A</text>
<text x="1640.500" y="122.500" font-family="Liberation Mono, monospace" font-size="14" fill="#00ee00">B</text>
<text x="1656" y="104.500" font-family="Liberation Sans, sans-serif" font-size="14" fill="#ff00ff">α</text>
<path d="M1687.500 88.500 H1718 L1725 95.500 V126 H1709.500 V112 H1687.500Z" fill="#00ff00" stroke="#000" stroke-width="2.200"/>
<text x="1693.500" y="107" font-family="Liberation Sans, sans-serif" font-weight="bold" font-size="14" fill="#000">m</text><text x="1706.500" y="102" font-family="Liberation Sans, sans-serif" font-weight="bold" font-size="11" fill="#000">2</text>
<circle cx="1764.700" cy="94" r="6" fill="none" stroke="#000" stroke-width="1.400"/><circle cx="1764.700" cy="94" r="1.100" fill="#000"/>
<path d="M1766.500 112.500 L1794 85.500" stroke="#000" stroke-width="1.500"/><path d="M1784 106 H1798 M1791 99 V113" stroke="#000" stroke-width="1.600"/>
<text x="1759.500" y="128.500" font-family="Liberation Sans, sans-serif" font-size="12.500" fill="#000" textLength="38.500" lengthAdjust="spacingAndGlyphs">X Y Z</text>
<path d="M1819.5 87.0 L1826.5 94.0 M1826.5 87.0 L1819.5 94.0" stroke="#000" stroke-width="1.4"/>
<path d="M1836.0 89.0 L1843.0 96.0 M1843.0 89.0 L1836.0 96.0" stroke="#000" stroke-width="1.4"/>
<path d="M1823.5 100.0 L1830.5 107.0 M1830.5 100.0 L1823.5 107.0" stroke="#000" stroke-width="1.4"/>
<path d="M1821.5 117.0 L1828.5 124.0 M1828.5 117.0 L1821.5 124.0" stroke="#000" stroke-width="1.4"/>
<rect x="1860" y="97" width="2" height="2" fill="#000"/>
<rect x="1856" y="105" width="2" height="2" fill="#000"/>
<rect x="1856" y="117" width="2" height="2" fill="#000"/>
<rect x="1856" y="126" width="2" height="2" fill="#000"/>
<rect x="1838" y="126" width="2" height="2" fill="#000"/>
<rect x="1848" y="120" width="2" height="2" fill="#000"/>
<rect x="1848" y="111" width="2" height="2" fill="#000"/>
<rect x="1852" y="98" width="2" height="2" fill="#000"/>
<rect x="1825" y="107" width="2" height="2" fill="#000"/>
<path d="M1827.500 102 L1838 122 L1856 88.500" fill="none" stroke="#ff0000" stroke-width="4.600"/>
<path d="M1899 102.500 L1885 124 H1913Z" fill="none" stroke="#00ff00" stroke-width="1.600"/>
<path d="M1893.5 111.0 L1904.5 122.0 M1904.5 111.0 L1893.5 122.0" stroke="#000" stroke-width="1.4"/>
<path d="M1881 98.500 V90.500 H1894" fill="none" stroke="#000" stroke-width="1.600"/>
<path d="M1885.7 92.2 L1891.3 97.8 M1891.3 92.2 L1885.7 97.8" stroke="#000" stroke-width="1.6"/>
<text x="1905.500" y="107" font-family="Liberation Sans, sans-serif" font-size="18" fill="#000" textLength="17" lengthAdjust="spacingAndGlyphs">12</text>
<path d="M1944 97.500 L1972 124.500" stroke="#a0a0a0" stroke-width="1.400"/>
<path d="M1948.1000000000001 115.7 L1953.3 120.89999999999999 M1953.3 115.7 L1948.1000000000001 120.89999999999999" stroke="#000" stroke-width="1.4"/>
<path d="M1962.2 103.4 L1967.3999999999999 108.6 M1967.3999999999999 103.4 L1962.2 108.6" stroke="#000" stroke-width="1.4"/>
<text x="1967" y="101" font-family="Liberation Sans, sans-serif" font-size="18" fill="#000" textLength="16" lengthAdjust="spacingAndGlyphs">21</text>
</svg>
<div class="a" style="left:520px;top:1084px;width:811px;height:239px;overflow:hidden;background:#fff;border-left:1px solid #0078d7;border-bottom:1px solid #0078d7"></div>
<div class="a" style="left:520px;top:1084px;width:811px;height:43.5px;background:#0078d7;"></div>
<svg style="left:532px;top:1094px" width="25" height="25" viewBox="0 0 28 28">
<polygon points="27,1 27,27 1,27" fill="#e8e8e8" stroke="#222" stroke-width="1"/>
<path d="M27 27 L9 19 M27 27 L14 14 M27 27 L19 9" stroke="#333" stroke-width="0.800" fill="none"/>
<path d="M10 27 A17 17 0 0 1 27 10 M16 27 A11 11 0 0 1 27 16" stroke="#333" stroke-width="0.800" fill="none"/>
<text x="-2" y="16.500" font-family="Liberation Sans, sans-serif" font-size="15" font-weight="bold" fill="#00e8f0" stroke="#023" stroke-width="1.800" paint-order="stroke" transform="rotate(-45 8 12)">3D</text>
</svg>
<span class="t" style="top:1094.22px;font-size:19px;line-height:27px;color:#fff;left:563.3px;transform-origin:0 50%;">Pernaja.mm1.tdw - Elementtien valinta</span>
<div class="a" style="left:521px;top:1186px;width:810px;height:1.5px;background:#b9c4d0;"></div>
<svg style="left:0;top:0" width="1331" height="1350" viewBox="0 0 1331 1350">
<path d="M538.5 1162.5 V1156.5 Q538.5 1152.5 543.5 1152.5 H545.5" fill="none" stroke="#000" stroke-width="3.600"/><path d="M544.5 1147.0 L550.5 1152.5 L544.5 1158.0Z" fill="#000"/>
<path d="M554.5 1141 H566.3 L570.5 1145.2 V1161 H554.5Z" fill="#fff" stroke="#000" stroke-width="1.600"/><path d="M566.3 1141 V1145.2 H570.5" fill="none" stroke="#000" stroke-width="1.200"/>
<path d="M596 1162.5 V1156.5 Q596 1152.5 601 1152.5 H603" fill="none" stroke="#000" stroke-width="3.600"/><path d="M602 1147.0 L608 1152.5 L602 1158.0Z" fill="#000"/>
<path d="M611.5 1141 H623.3 L627.5 1145.2 V1161 H611.5Z" fill="#fff" stroke="#000" stroke-width="1.600"/><path d="M623.3 1141 V1145.2 H627.5" fill="none" stroke="#000" stroke-width="1.200"/>
<rect x="591.5" y="1164.8" width="19" height="9.500" fill="#e0e0e0" stroke="#000" stroke-width="1.800"/><rect x="595.5" y="1167.8" width="4.500" height="2" fill="#ff0000"/>
<path d="M653 1162.5 V1156.5 Q653 1152.5 658 1152.5 H660" fill="none" stroke="#000" stroke-width="3.600"/><path d="M659 1147.0 L665 1152.5 L659 1158.0Z" fill="#000"/>
<rect x="648" y="1164.8" width="19" height="9.500" fill="#e0e0e0" stroke="#000" stroke-width="1.800"/><rect x="652" y="1167.8" width="4.500" height="2" fill="#ff0000"/>
<path d="M655.9 1156.1 L667.9 1168.1 M659.2 1152.8 L671.2 1164.8 M662.5 1149.5 L674.5 1161.5 M665.8 1146.2 L677.8 1158.2 M669.1 1142.9 L681.1 1154.9 M672.4 1139.6 L684.4 1151.6 M675.7 1136.3 L687.7 1148.3" stroke="#000" stroke-width="1.500" fill="none" stroke-dasharray="3.500 1.600"/>
<path d="M676 1160.500 L680.500 1156 L685 1160.500 L680.500 1165Z M679 1139 L682 1142 L686 1137.500" stroke="#000" stroke-width="1.300" fill="none"/>
<path d="M712.5 1144 H716.5 V1161 H728.5 V1164 H712.5Z" fill="#ff0000" stroke="#000" stroke-width="1.600"/><path d="M716.5 1141 H728.3 L732.5 1145.2 V1161 H716.5Z" fill="#fff" stroke="#000" stroke-width="1.600"/><path d="M728.3 1141 V1145.2 H732.5" fill="none" stroke="#000" stroke-width="1.200"/>
<path d="M735 1146.5 H739 Q743 1146.5 743 1150.5 V1152.5" fill="none" stroke="#000" stroke-width="3.600"/><path d="M737 1151.5 H749 L743 1157.5Z" fill="#000"/>
<path d="M739.500 1159.500 H745 V1164.500 H750 V1169.500 H745 V1174.500 H739.500 V1169.500 H734.500 V1164.500 H739.500Z" fill="#fff" stroke="#000" stroke-width="1.500"/>
<path d="M780.5 1141 H792.3 L796.5 1145.2 V1161 H780.5Z" fill="#fff" stroke="#000" stroke-width="1.600"/><path d="M792.3 1141 V1145.2 H796.5" fill="none" stroke="#000" stroke-width="1.200"/>
<path d="M798 1152 H802 Q806 1152 806 1156 V1158" fill="none" stroke="#000" stroke-width="3.600"/><path d="M800 1157 H812 L806 1163Z" fill="#000"/>
<rect x="797" y="1164.8" width="19" height="9.500" fill="#e0e0e0" stroke="#000" stroke-width="1.800"/><rect x="801" y="1167.8" width="4.500" height="2" fill="#ff0000"/>
<path d="M837 1141 H848.8 L853 1145.2 V1161 H837Z" fill="#fff" stroke="#000" stroke-width="1.600"/><path d="M848.8 1141 V1145.2 H853" fill="none" stroke="#000" stroke-width="1.200"/>
<path d="M857 1144 H861 Q865 1144 865 1148 V1150" fill="none" stroke="#000" stroke-width="3.600"/><path d="M859 1149 H871 L865 1155Z" fill="#000"/>
<path d="M859.5 1156.5 H871.3 L875.5 1160.7 V1176.5 H859.5Z" fill="#fff" stroke="#000" stroke-width="1.600"/><path d="M871.3 1156.5 V1160.7 H875.5" fill="none" stroke="#000" stroke-width="1.200"/>
<text x="894" y="1164.500" font-family="Liberation Sans, sans-serif" font-weight="bold" font-size="31" fill="#ff0000" textLength="17" lengthAdjust="spacingAndGlyphs">?</text>
<path d="M913 1152 H917 Q921 1152 921 1156 V1158" fill="none" stroke="#000" stroke-width="3.600"/><path d="M915 1157 H927 L921 1163Z" fill="#000"/>
<rect x="910.5" y="1164.8" width="19" height="9.500" fill="#e0e0e0" stroke="#000" stroke-width="1.800"/><rect x="914.5" y="1167.8" width="4.500" height="2" fill="#ff0000"/>
<path d="M949 1144 H953 V1161 H965 V1164 H949Z" fill="#ff0000" stroke="#000" stroke-width="1.600"/><path d="M953 1141 H964.8 L969 1145.2 V1161 H953Z" fill="#fff" stroke="#000" stroke-width="1.600"/><path d="M964.8 1141 V1145.2 H969" fill="none" stroke="#000" stroke-width="1.200"/>
<path d="M970 1152 H974 Q978 1152 978 1156 V1158" fill="none" stroke="#000" stroke-width="3.600"/><path d="M972 1157 H984 L978 1163Z" fill="#000"/>
<rect x="967.5" y="1164.8" width="19" height="9.500" fill="#e0e0e0" stroke="#000" stroke-width="1.800"/><rect x="971.5" y="1167.8" width="4.500" height="2" fill="#ff0000"/>
<path d="M1017 1141 H1028.8 L1033 1145.2 V1161 H1017Z" fill="#fff" stroke="#000" stroke-width="1.600"/><path d="M1028.8 1141 V1145.2 H1033" fill="none" stroke="#000" stroke-width="1.200"/>
<path d="M1037 1152 H1041 Q1045 1152 1045 1156 V1158" fill="none" stroke="#000" stroke-width="3.600"/><path d="M1039 1157 H1051 L1045 1163Z" fill="#000"/>
<path d="M1072 1144 H1076 V1161 H1088 V1164 H1072Z" fill="#ff0000" stroke="#000" stroke-width="1.600"/><path d="M1076 1141 H1087.8 L1092 1145.2 V1161 H1076Z" fill="#fff" stroke="#000" stroke-width="1.600"/><path d="M1087.8 1141 V1145.2 H1092" fill="none" stroke="#000" stroke-width="1.200"/>
<path d="M1095 1152 H1099 Q1103 1152 1103 1156 V1158" fill="none" stroke="#000" stroke-width="3.600"/><path d="M1097 1157 H1109 L1103 1163Z" fill="#000"/>
<path d="M1139.5 1145.5 H1150.5 M1145 1140.0 V1151.0" stroke="#ff0000" stroke-width="3.6" shape-rendering="crispEdges"/>
<path d="M1151.5 1151 H1163.3 L1167.5 1155.2 V1173.5 H1151.5Z" fill="#fff" stroke="#000" stroke-width="1.600"/><path d="M1163.3 1151 V1155.2 H1167.5" fill="none" stroke="#000" stroke-width="1.200"/>
<path d="M1155.500 1148 H1159.500 V1166.500 H1172 V1170 H1155.500Z" fill="#ff0000" stroke="#000" stroke-width="1.500"/>
<path d="M1159.5 1145 H1171.3 L1175.5 1149.2 V1166.5 H1159.5Z" fill="#fff" stroke="#000" stroke-width="1.600"/><path d="M1171.3 1145 V1149.2 H1175.5" fill="none" stroke="#000" stroke-width="1.200"/>
<g transform="translate(1204,1139) scale(0.9,0.845)"><g transform="translate(0,0)" shape-rendering="crispEdges">
<path d="M2 0H42V2H44V35H42V37H2V35H0V2H2Z" fill="#a0a0a0"/><rect x="4" y="4" width="36" height="29" fill="#fff"/>
<rect x="9" y="37" width="26" height="4" fill="#a0a0a0"/><rect x="4" y="41" width="36" height="3" fill="#a0a0a0"/></g>
<g transform="translate(0,0)"><g stroke="#000" stroke-width="1.500" fill="none"><path d="M8 8 L14 14 M8 13 V8 H13 M36 8 L30 14 M31 8 H36 V13 M8 29 L14 23 M8 24 V29 H13 M36 29 L30 23 M36 24 V29 H31"/></g></g></g>
<g transform="translate(1261,1139) scale(0.9,0.845)"><g transform="translate(0,0)" shape-rendering="crispEdges">
<path d="M2 0H42V2H44V35H42V37H2V35H0V2H2Z" fill="#a0a0a0"/><rect x="4" y="4" width="36" height="29" fill="#fff"/>
<rect x="9" y="37" width="26" height="4" fill="#a0a0a0"/><rect x="4" y="41" width="36" height="3" fill="#a0a0a0"/></g>
<g transform="translate(0,0)"><g><path d="M20.800 15.400 L23 15.400 V8 H32 V16.600 L33.800 16.800 V24.400 L30.700 25.300 L28.900 28.900 L26.200 30.200 L8.100 29.600 V28.200 L17.200 27.600 L19 22.600Z" fill="#000"/>
<path d="M21.700 16.800 H28 L27 20.800 L24.400 21.700 L27 23.500 L22.600 26.200 L19 28 L18 27 L20.800 22.600Z" fill="#ffff00"/><rect x="24.300" y="10.300" width="4.200" height="4.200" fill="#fff"/></g></g></g>
<rect x="699.0" y="1133" width="1" height="49" fill="#a0a0a0"/>
<rect x="765.0" y="1133" width="1" height="49" fill="#a0a0a0"/>
<rect x="1001.5" y="1133" width="1" height="49" fill="#a0a0a0"/>
<rect x="1125.0" y="1133" width="1" height="49" fill="#a0a0a0"/>
<rect x="1191.0" y="1133" width="1" height="49" fill="#a0a0a0"/>
<rect x="1314.0" y="1133" width="1" height="49" fill="#a0a0a0"/>
<rect x="1327.500" y="1140" width="2" height="2" fill="#333"/>
<rect x="1327.500" y="1147" width="2" height="2" fill="#333"/>
<rect x="1327.500" y="1154" width="2" height="2" fill="#333"/>
<rect x="1327.500" y="1161" width="2" height="2" fill="#333"/>
</svg>
<span class="t" style="top:1192.62px;font-size:19px;line-height:27px;color:#333;left:529px;transform-origin:0 50%;transform:scaleX(1.0342);">Nimi</span>
<span class="t" style="top:1192.62px;font-size:19px;line-height:27px;color:#333;left:888.3px;transform-origin:0 50%;transform:scaleX(0.9467);">Editoi...</span>
<span class="t" style="top:1192.62px;font-size:19px;line-height:27px;color:#333;left:980.7px;transform-origin:0 50%;transform:scaleX(0.9379);">Käytössä</span>
<span class="t" style="top:1192.62px;font-size:19px;line-height:27px;color:#333;left:1128.3px;transform-origin:0 50%;transform:scaleX(0.9315);">Piilossa</span>
<div class="a" style="left:1318px;top:1195px;width:13px;height:30px;overflow:hidden">
<span class="t" style="top:-2.38px;font-size:19px;line-height:27px;color:#333;left:0.3px;transform-origin:0 50%;">A</span>
</div>
<div class="a" style="left:881.5px;top:1188px;width:1px;height:32px;background:#e5e5e5;"></div>
<div class="a" style="left:955px;top:1188px;width:1px;height:32px;background:#e5e5e5;"></div>
<div class="a" style="left:1079px;top:1188px;width:1px;height:32px;background:#e5e5e5;"></div>
<div class="a" style="left:1238.5px;top:1188px;width:1px;height:32px;background:#e5e5e5;"></div>
<div class="a" style="left:527px;top:1227px;width:18px;height:18px;background:#fff;border:1px solid #333;"></div>
<span class="t" style="top:1223.72px;font-size:19px;line-height:27px;color:#000;left:550px;transform-origin:0 50%;transform:scaleX(0.9740);">Pernaja.xy.tdw</span>
<span class="t" style="top:1224.56px;font-size:18px;line-height:25px;color:#000;left:1006.7px;transform-origin:0 50%;transform:scaleX(0.9084);">[X]</span>
<span class="t" style="top:1224.56px;font-size:18px;line-height:25px;color:#000;left:1148.3px;transform-origin:0 50%;transform:scaleX(1.3786);">[ ]</span>
<div class="a" style="left:547.5px;top:1250.5px;width:153px;height:28.5px;background:#0078d7;border:1px dotted #e8a060;"></div>
<div class="a" style="left:527px;top:1256px;width:18px;height:18px;background:#fff;border:1px solid #333;"></div>
<svg style="left:527px;top:1256px" width="18" height="18" viewBox="0 0 18 18"><path d="M3.500 9 L7 13 L14.500 4.500" fill="none" stroke="#222" stroke-width="1.400"/></svg>
<span class="t" style="top:1252.92px;font-size:19px;line-height:27px;color:#fff;left:550.7px;transform-origin:0 50%;transform:scaleX(0.9760);">Pernaja.mm1.tdw</span>
<span class="t" style="top:1253.56px;font-size:18px;line-height:25px;color:#ff0000;left:913.3px;transform-origin:0 50%;transform:scaleX(0.8905);">X</span>
<span class="t" style="top:1253.56px;font-size:18px;line-height:25px;color:#000;left:1006.7px;transform-origin:0 50%;transform:scaleX(0.9084);">[X]</span>
<span class="t" style="top:1253.56px;font-size:18px;line-height:25px;color:#000;left:1148.3px;transform-origin:0 50%;transform:scaleX(1.3786);">[ ]</span>
<div class="a" style="left:521px;top:1294px;width:810px;height:28px;background:#f0f0f0;border-top:1px solid #c0c0c0;"></div>
<div class="a" style="left:881.5px;top:1295px;width:1px;height:27px;background:#8a8a8a;"></div>
<div class="a" style="left:955px;top:1295px;width:1px;height:27px;background:#8a8a8a;"></div>
<div class="a" style="left:1079px;top:1295px;width:1px;height:27px;background:#8a8a8a;"></div>
<div class="a" style="left:1238.5px;top:1295px;width:1px;height:27px;background:#8a8a8a;"></div>
<span class="t" style="top:1295.92px;font-size:19px;line-height:27px;color:#000;left:531.7px;transform-origin:0 50%;transform:scaleX(1.0166);">1 / 2</span>
<span class="t" style="top:1295.92px;font-size:19px;line-height:27px;color:#000;left:914.3px;transform-origin:0 50%;transform:scaleX(0.6996);">1</span>
<span class="t" style="top:1295.92px;font-size:19px;line-height:27px;color:#000;left:1011.7px;transform-origin:0 50%;transform:scaleX(0.8508);">2</span>
<svg style="left:0;top:0" width="1331" height="1350"><ellipse cx="622.150" cy="1269.300" rx="136.600" ry="30.750" fill="none" stroke="#000" stroke-width="5.500"/></svg>
<div class="a" style="left:1px;top:72px;width:841px;height:706px;background:#f2f2f2;border:1px solid #cccccc;box-shadow:3px 3px 4px rgba(0,0,0,0.5);"></div>
<span class="t" style="top:79.17px;font-size:20px;line-height:28px;color:#000;left:44px;transform-origin:0 50%;transform:scaleX(0.9746);">Uusi</span>
<span class="t" style="top:79.17px;font-size:20px;line-height:28px;color:#000;left:753px;transform-origin:0 50%;transform:scaleX(1.0658);">Ctrl+N</span>
<span class="t" style="top:111.17px;font-size:20px;line-height:28px;color:#000;left:44px;transform-origin:0 50%;transform:scaleX(0.9692);">Avaa...</span>
<span class="t" style="top:111.17px;font-size:20px;line-height:28px;color:#000;left:753px;transform-origin:0 50%;transform:scaleX(1.0627);">Ctrl+O</span>
<span class="t" style="top:143.17px;font-size:20px;line-height:28px;color:#000;left:44px;transform-origin:0 50%;">Avaa LandXML...</span>
<span class="t" style="top:175.17px;font-size:20px;line-height:28px;color:#000;left:44px;transform-origin:0 50%;transform:scaleX(1.0042);">Yhdistä</span>
<svg style="left:821px;top:180px" width="8" height="14" viewBox="0 0 8 14"><path d="M1.5 2 L6.5 7 L1.5 12" fill="none" stroke="#222" stroke-width="1.3"/></svg>
<div class="a" style="left:40px;top:206px;width:799px;height:1px;background:#d7d7d7;"></div>
<span class="t" style="top:214.17px;font-size:20px;line-height:28px;color:#000;left:44px;transform-origin:0 50%;transform:scaleX(1.0065);">Tallenna</span>
<svg style="left:821px;top:219px" width="8" height="14" viewBox="0 0 8 14"><path d="M1.5 2 L6.5 7 L1.5 12" fill="none" stroke="#222" stroke-width="1.3"/></svg>
<span class="t" style="top:246.17px;font-size:20px;line-height:28px;color:#000;left:44px;transform-origin:0 50%;transform:scaleX(1.0225);">Tyhjennä</span>
<svg style="left:821px;top:251px" width="8" height="14" viewBox="0 0 8 14"><path d="M1.5 2 L6.5 7 L1.5 12" fill="none" stroke="#222" stroke-width="1.3"/></svg>
<div class="a" style="left:3px;top:273.5px;width:833px;height:32px;background:#91c9f7;"></div>
<span class="t" style="top:278.17px;font-size:20px;line-height:28px;color:#000;left:44px;transform-origin:0 50%;transform:scaleX(1.0418);">Formaatit</span>
<svg style="left:821px;top:283px" width="8" height="14" viewBox="0 0 8 14"><path d="M1.5 2 L6.5 7 L1.5 12" fill="none" stroke="#222" stroke-width="1.3"/></svg>
<span class="t" style="top:310.17px;font-size:20px;line-height:28px;color:#000;left:44px;transform-origin:0 50%;transform:scaleX(1.0435);">Elementit</span>
<svg style="left:821px;top:315px" width="8" height="14" viewBox="0 0 8 14"><path d="M1.5 2 L6.5 7 L1.5 12" fill="none" stroke="#222" stroke-width="1.3"/></svg>
<div class="a" style="left:40px;top:341px;width:799px;height:1px;background:#d7d7d7;"></div>
<span class="t" style="top:349.17px;font-size:20px;line-height:28px;color:#000;left:44px;transform-origin:0 50%;transform:scaleX(1.0128);">Kuvatiedosto...</span>
<span class="t" style="top:381.17px;font-size:20px;line-height:28px;color:#000;left:44px;transform-origin:0 50%;transform:scaleX(1.0154);">Tulostus</span>
<svg style="left:821px;top:386px" width="8" height="14" viewBox="0 0 8 14"><path d="M1.5 2 L6.5 7 L1.5 12" fill="none" stroke="#222" stroke-width="1.3"/></svg>
<div class="a" style="left:40px;top:412px;width:799px;height:1px;background:#d7d7d7;"></div>
<span class="t" style="top:420.17px;font-size:20px;line-height:28px;color:#000;left:44px;transform-origin:0 50%;transform:scaleX(1.0135);">Lopeta</span>
<span class="t" style="top:420.17px;font-size:20px;line-height:28px;color:#000;left:755px;transform-origin:0 50%;transform:scaleX(1.0110);">Alt+F4</span>
<div class="a" style="left:40px;top:451px;width:799px;height:1px;background:#d7d7d7;"></div>
<span class="t" style="top:459.17px;font-size:20px;line-height:28px;color:#000;left:44px;transform-origin:0 50%;transform:scaleX(1.0512);">1 C:\...\Documents\3D-System\3D-Win\Data\Map\Pernaja.xy.tdw</span>
<span class="t" style="top:491.17px;font-size:20px;line-height:28px;color:#000;left:44px;transform-origin:0 50%;transform:scaleX(1.0537);">2 C:\...\3D-System\3D-Win\Data\Model\Mylläri_virhe.xy.tdw</span>
<span class="t" style="top:523.17px;font-size:20px;line-height:28px;color:#000;left:44px;transform-origin:0 50%;transform:scaleX(1.0453);">3 C:\...\3D-System\3D-Win\Data\Model\Mylläri_tasanne_20m.xy.tdw</span>
<span class="t" style="top:555.17px;font-size:20px;line-height:28px;color:#000;left:44px;transform-origin:0 50%;transform:scaleX(1.0514);">4 C:\...\Documents\3D-System\3D-Win\Data\Model\hakekasa.xy.tdw</span>
<span class="t" style="top:587.17px;font-size:20px;line-height:28px;color:#000;left:44px;transform-origin:0 50%;transform:scaleX(1.0535);">5 C:\...\3D-Win\Data\Model\Mylläri_kaukolämpö_kaivanto.xy.tdw</span>
<span class="t" style="top:619.17px;font-size:20px;line-height:28px;color:#000;left:44px;transform-origin:0 50%;transform:scaleX(1.0547);">6 C:\...\3D-System\3D-Win\Data\Model\Mylläri_kuoppa.xy.tdw</span>
<span class="t" style="top:651.17px;font-size:20px;line-height:28px;color:#000;left:44px;transform-origin:0 50%;transform:scaleX(1.0623);">7 C:\...\Documents\3D-System\3D-Win\Data\Model\Mylläri.xy.tdw</span>
<span class="t" style="top:683.17px;font-size:20px;line-height:28px;color:#000;left:44px;transform-origin:0 50%;transform:scaleX(1.0528);">8 C:\...\3D-System\3D-Win\Data\Model\Mylläri_kalliot.xy2.tdw</span>
<span class="t" style="top:715.17px;font-size:20px;line-height:28px;color:#000;left:44px;transform-origin:0 50%;transform:scaleX(1.0299);">9 C:\...\3D-System\3D-Win\Data\Model\hakekasa_rajaus_2014.xy.tdw</span>
<span class="t" style="top:747.17px;font-size:20px;line-height:28px;color:#000;left:44px;transform-origin:0 50%;transform:scaleX(1.0577);">10 C:\...\Documents\3D-System\3D-Win\Data\Model\Mylläri_talo.xy.tdw</span>
<div class="a" style="left:836px;top:271px;width:353px;height:347px;background:#f2f2f2;border:1px solid #cccccc;box-shadow:3px 3px 4px rgba(0,0,0,0.5);"></div>
<span class="t" style="top:278.17px;font-size:20px;line-height:28px;color:#000;left:880px;transform-origin:0 50%;transform:scaleX(1.0414);">Vektoritiedosto...</span>
<span class="t" style="top:310.17px;font-size:20px;line-height:28px;color:#000;left:880px;transform-origin:0 50%;transform:scaleX(0.9896);">Rasterikuva...</span>
<span class="t" style="top:342.17px;font-size:20px;line-height:28px;color:#000;left:880px;transform-origin:0 50%;transform:scaleX(1.0160);">Kairaustiedosto...</span>
<span class="t" style="top:374.17px;font-size:20px;line-height:28px;color:#000;left:880px;transform-origin:0 50%;transform:scaleX(1.0252);">Tiegeometria...</span>
<span class="t" style="top:406.17px;font-size:20px;line-height:28px;color:#000;left:880px;transform-origin:0 50%;transform:scaleX(1.0375);">Maastomalli...</span>
<div class="a" style="left:876px;top:437px;width:310px;height:1px;background:#d7d7d7;"></div>
<span class="t" style="top:445.17px;font-size:20px;line-height:28px;color:#000;left:880px;transform-origin:0 50%;transform:scaleX(1.0232);">LandXML käsittely...</span>
<div class="a" style="left:876px;top:476px;width:310px;height:1px;background:#d7d7d7;"></div>
<div class="a" style="left:839px;top:480px;width:346px;height:32px;background:#91c9f7;"></div>
<span class="t" style="top:484.17px;font-size:20px;line-height:28px;color:#000;left:880px;transform-origin:0 50%;transform:scaleX(1.0153);">Kirjoita...</span>
<span class="t" style="top:516.17px;font-size:20px;line-height:28px;color:#000;left:880px;transform-origin:0 50%;transform:scaleX(1.0471);">Kirjoita valitut...</span>
<div class="a" style="left:876px;top:547px;width:310px;height:1px;background:#d7d7d7;"></div>
<span class="t" style="top:555.17px;font-size:20px;line-height:28px;color:#000;left:880px;transform-origin:0 50%;transform:scaleX(1.0093);">Sarjamuunnos...</span>
<span class="t" style="top:587.17px;font-size:20px;line-height:28px;color:#000;left:880px;transform-origin:0 50%;transform:scaleX(1.0492);">Lokitiedosto</span>
<span class="t" style="top:587.17px;font-size:20px;line-height:28px;color:#000;left:1106px;transform-origin:0 50%;transform:scaleX(1.0388);">Ctrl+L</span>
<div class="a" style="left:1362px;top:269px;width:492px;height:729px;background:#f0f0f0;border:1px solid #b0b0b0;box-shadow:0 4px 14px rgba(0,0,0,0.35);"></div>
<span class="t" style="top:282.57px;font-size:20px;line-height:28px;color:#999999;left:1375.5px;transform-origin:0 50%;transform:scaleX(1.0334);">Kirjoita maastomalli: Pernaja.mm1.tdw</span>
<svg style="left:1817px;top:288px" width="16" height="16" viewBox="0 0 16 16"><path d="M0.5 0.5 L15.5 15.5 M15.5 0.5 L0.5 15.5" stroke="#777" stroke-width="1.2" fill="none"/></svg>
<div class="a" style="left:1373px;top:333px;width:350px;height:35px;background:#e6e6e6;border:1px solid #c8c8c8;"></div>
<span class="t" style="top:379.76px;font-size:18px;line-height:25px;color:#000;left:1373.4px;transform-origin:0 50%;transform:scaleX(1.0696);">Muuntimet</span>
<div class="a" style="left:1373px;top:402px;width:350px;height:510px;background:#fff;border:1px solid #828790;"></div>
<div class="a" style="left:1375px;top:404px;width:346px;height:23px;background:#0078d7;"></div>
<span class="t" style="top:404.86px;font-size:18px;line-height:25px;color:#fff;left:1377.5px;transform-origin:0 50%;transform:scaleX(0.9646);">3D</span>
<span class="t" style="top:428.06px;font-size:18px;line-height:25px;color:#000;left:1377.5px;transform-origin:0 50%;transform:scaleX(1.0282);">3D 5.x</span>
<span class="t" style="top:451.16px;font-size:18px;line-height:25px;color:#000;left:1377.5px;transform-origin:0 50%;transform:scaleX(1.0232);">Dwg2</span>
<span class="t" style="top:474.26px;font-size:18px;line-height:25px;color:#000;left:1377.5px;transform-origin:0 50%;transform:scaleX(0.9861);">Dxf2</span>
<span class="t" style="top:497.36px;font-size:18px;line-height:25px;color:#000;left:1377.5px;transform-origin:0 50%;">LandXml</span>
<div class="a" style="left:1734px;top:334px;width:108px;height:33px;background:#e1e1e1;border:1px solid #adadad;"></div>
<span class="t" style="top:339.86px;font-size:18px;line-height:25px;color:#000;left:1768px;transform-origin:0 50%;transform:scaleX(1.0522);">OK *</span>
<div class="a" style="left:1734px;top:380px;width:108px;height:33px;background:#e1e1e1;border:1px solid #adadad;"></div>
<span class="t" style="top:386.16px;font-size:18px;line-height:25px;color:#000;left:1755.5px;transform-origin:0 50%;transform:scaleX(1.0183);">Peruuta</span>
<div class="a" style="left:1734px;top:426px;width:108px;height:33px;background:#e1e1e1;border:1px solid #adadad;"></div>
<span class="t" style="top:431.76px;font-size:18px;line-height:25px;color:#000;left:1760px;transform-origin:0 50%;transform:scaleX(1.0933);">Ohje *</span>
<div class="a" style="left:1734px;top:483px;width:108px;height:33px;background:#e1e1e1;border:1px solid #adadad;"></div>
<span class="t" style="top:488.96px;font-size:18px;line-height:25px;color:#000;left:1761.8px;transform-origin:0 50%;transform:scaleX(0.9643);">Sisältö</span>
<div class="a" style="left:1734px;top:702px;width:108px;height:33px;background:#e1e1e1;border:1px solid #adadad;"></div>
<span class="t" style="top:707.66px;font-size:18px;line-height:25px;color:#000;left:1759.8px;transform-origin:0 50%;transform:scaleX(1.0191);">Lisää *</span>
<div class="a" style="left:1734px;top:748px;width:108px;height:33px;background:#e1e1e1;border:1px solid #adadad;"></div>
<span class="t" style="top:753.86px;font-size:18px;line-height:25px;color:#000;left:1757.5px;transform-origin:0 50%;transform:scaleX(1.0746);">Editoi *</span>
<div class="a" style="left:1734px;top:794px;width:108px;height:33px;background:#e1e1e1;border:1px solid #adadad;"></div>
<span class="t" style="top:799.56px;font-size:18px;line-height:25px;color:#000;left:1764.7px;transform-origin:0 50%;transform:scaleX(0.9374);">Poista</span>
<div class="a" style="left:1734px;top:851px;width:108px;height:33px;background:#e1e1e1;border:1px solid #adadad;"></div>
<span class="t" style="top:857.06px;font-size:18px;line-height:25px;color:#000;left:1761.3px;transform-origin:0 50%;transform:scaleX(1.0657);">Tuonti</span>
<div class="a" style="left:1734px;top:897px;width:108px;height:33px;background:#e1e1e1;border:1px solid #adadad;"></div>
<span class="t" style="top:902.66px;font-size:18px;line-height:25px;color:#000;left:1757.5px;transform-origin:0 50%;transform:scaleX(1.0808);">Vienti *</span>
<div class="a" style="left:1734px;top:955px;width:108px;height:33px;background:#e1e1e1;border:1px solid #adadad;"></div>
<span class="t" style="top:960.56px;font-size:18px;line-height:25px;color:#000;left:1747.4px;transform-origin:0 50%;transform:scaleX(1.0312);">Suosikki *</span>
<span class="t" style="top:955.36px;font-size:18px;line-height:25px;color:#000;left:1373.4px;transform-origin:0 50%;transform:scaleX(1.0040);">Haku</span>
<div class="a" style="left:1473px;top:954px;width:250px;height:31px;background:#fff;border:1px solid #7a7a7a;"></div>
<svg style="left:1700.5px;top:966px" width="14" height="8" viewBox="0 0 14 8"><path d="M2 1.500 L7 6.500 L12 1.500" fill="none" stroke="#444" stroke-width="1.050"/></svg>
<svg style="left:0;top:0" width="2547" height="1350"><ellipse cx="1787.050" cy="716.850" rx="63.550" ry="26.650" fill="none" stroke="#000" stroke-width="4.800"/></svg>
<div class="a" style="left:1852px;top:491px;width:700px;height:821px;background:#f0f0f0;border:1px solid #0078d7;box-shadow:0 6px 22px rgba(0,0,0,0.4);"></div>
<div class="a" style="left:1852px;top:491px;width:700px;height:52px;background:#0078d7;"></div>
<span class="t" style="top:503.22px;font-size:21px;line-height:29px;color:#fff;left:1865.4px;transform-origin:0 50%;transform:scaleX(0.9683);">Asetukset</span>
<svg style="left:2509.5px;top:510px" width="16" height="16" viewBox="0 0 16 16"><path d="M0.5 0.5 L15.5 15.5 M15.5 0.5 L0.5 15.5" stroke="#fff" stroke-width="1.3" fill="none"/></svg>
<span class="t" style="top:566.96px;font-size:18px;line-height:25px;color:#000;left:1863.5px;transform-origin:0 50%;">Nimi</span>
<div class="a" style="left:1943px;top:555px;width:470px;height:35px;background:#fff;border:1px solid #7a7a7a;"></div>
<span class="t" style="top:558.76px;font-size:18px;line-height:25px;color:#000;left:1950.8px;transform-origin:0 50%;transform:scaleX(0.9869);">TTM</span>
<div class="a" style="left:2424px;top:556px;width:108px;height:33px;background:#e1e1e1;border:2px solid #0078d7;"></div>
<span class="t" style="top:561.96px;font-size:18px;line-height:25px;color:#000;left:2465.8px;transform-origin:0 50%;transform:scaleX(0.9148);">OK</span>
<div class="a" style="left:2424px;top:602px;width:108px;height:33px;background:#e1e1e1;border:1px solid #adadad;"></div>
<span class="t" style="top:607.66px;font-size:18px;line-height:25px;color:#000;left:2445.3px;transform-origin:0 50%;transform:scaleX(1.0135);">Peruuta</span>
<div class="a" style="left:2424px;top:648px;width:108px;height:33px;background:#e1e1e1;border:1px solid #adadad;"></div>
<span class="t" style="top:653.66px;font-size:18px;line-height:25px;color:#000;left:2458.3px;transform-origin:0 50%;transform:scaleX(0.9913);">Ohje</span>
<div class="a" style="left:2424px;top:924px;width:108px;height:33px;background:#e1e1e1;border:1px solid #adadad;"></div>
<span class="t" style="top:930.16px;font-size:18px;line-height:25px;color:#000;left:2451.8px;transform-origin:0 50%;transform:scaleX(0.9664);">Erikois</span>
<div class="a" style="left:2424px;top:970px;width:108px;height:33px;background:#e1e1e1;border:1px solid #adadad;"></div>
<span class="t" style="top:975.86px;font-size:18px;line-height:25px;color:#000;left:2447.2px;transform-origin:0 50%;transform:scaleX(1.0045);">Projekti</span>
<div class="a" style="left:2424px;top:1016px;width:108px;height:33px;background:#e1e1e1;border:1px solid #adadad;"></div>
<span class="t" style="top:1022.16px;font-size:18px;line-height:25px;color:#000;left:2435.5px;transform-origin:0 50%;">Normalisoi</span>
<div class="a" style="left:2424px;top:1062px;width:108px;height:33px;background:#e1e1e1;border:1px solid #adadad;"></div>
<span class="t" style="top:1067.76px;font-size:18px;line-height:25px;color:#000;left:2460.9px;transform-origin:0 50%;transform:scaleX(0.9510);">XYZ</span>
<div class="a" style="left:2424px;top:1119px;width:108px;height:33px;background:#e1e1e1;border:1px solid #adadad;"></div>
<span class="t" style="top:1124.76px;font-size:18px;line-height:25px;color:#000;left:2451.2px;transform-origin:0 50%;transform:scaleX(1.0318);">Kentät</span>
<div class="a" style="left:2424px;top:1165px;width:108px;height:33px;background:#e1e1e1;border:1px solid #adadad;"></div>
<span class="t" style="top:1171.06px;font-size:18px;line-height:25px;color:#000;left:2451.2px;transform-origin:0 50%;transform:scaleX(1.0526);">Tekstit</span>
<div class="a" style="left:2424px;top:1211px;width:108px;height:33px;background:#e1e1e1;border:1px solid #adadad;"></div>
<span class="t" style="top:1216.96px;font-size:18px;line-height:25px;color:#000;left:2457px;transform-origin:0 50%;transform:scaleX(0.9947);">Piirto</span>
<div class="a" style="left:2424px;top:1269px;width:108px;height:33px;background:#cccccc;border:1px solid #bfbfbf;"></div>
<span class="t" style="top:1274.76px;font-size:18px;line-height:25px;color:#838383;left:2456.7px;transform-origin:0 50%;transform:scaleX(1.0567);">Muut</span>
<div class="a" style="left:1864px;top:602px;width:548px;height:148px;border:1px solid #a0a0a0;"></div>
<span class="t" style="top:624.26px;font-size:18px;line-height:25px;color:#000;left:1873.2px;transform-origin:0 50%;transform:scaleX(1.0283);">Funktio</span>
<div class="a" style="left:1873px;top:660px;width:130px;height:40px;overflow:hidden">
<span class="t" style="top:10.56px;font-size:18px;line-height:25px;color:#000;left:0.2px;transform-origin:0 50%;transform:scaleX(1.0418);">Tiedostopäättee</span>
</div>
<span class="t" style="top:716.16px;font-size:18px;line-height:25px;color:#000;left:1873.2px;transform-origin:0 50%;">Lisäys nimeen</span>
<div class="a" style="left:1864px;top:763px;width:268px;height:194px;border:1px solid #a0a0a0;"></div>
<div class="a" style="left:2144px;top:763px;width:268px;height:194px;border:1px solid #a0a0a0;"></div>
<svg style="left:1873px;top:774px" width="20" height="20" viewBox="0 0 20 20"><rect x="0.5" y="0.5" width="19" height="19" fill="#fff" stroke="#333"/><path d="M4 10 L8 14.5 L16 5" fill="none" stroke="#222" stroke-width="1.5"/></svg>
<span class="t" style="top:774.26px;font-size:18px;line-height:25px;color:#000;left:1898px;transform-origin:0 50%;transform:scaleX(1.0079);">Ominaisuus</span>
<svg style="left:1903px;top:809px" width="20" height="20" viewBox="0 0 20 20"><rect x="0.5" y="0.5" width="19" height="19" fill="#fff" stroke="#333"/></svg>
<div class="a" style="left:1928px;top:800px;width:85px;height:40px;overflow:hidden">
<span class="t" style="top:8.46px;font-size:18px;line-height:25px;color:#000;left:0.7px;transform-origin:0 50%;transform:scaleX(1.03);transform-origin:0 50%;">Muunna to</span>
</div>
<svg style="left:1873px;top:855px" width="20" height="20" viewBox="0 0 20 20"><rect x="0.5" y="0.5" width="19" height="19" fill="#fff" stroke="#333"/></svg>
<div class="a" style="left:1898px;top:846px;width:115px;height:40px;overflow:hidden">
<span class="t" style="top:8.76px;font-size:18px;line-height:25px;color:#000;left:0px;transform-origin:0 50%;transform:scaleX(1.025);transform-origin:0 50%;">Poista piirtotied</span>
</div>
<svg style="left:1873px;top:889px" width="20" height="20" viewBox="0 0 20 20"><rect x="0.5" y="0.5" width="19" height="19" fill="#fff" stroke="#333"/><path d="M4 10 L8 14.5 L16 5" fill="none" stroke="#222" stroke-width="1.5"/></svg>
<span class="t" style="top:888.96px;font-size:18px;line-height:25px;color:#000;left:1898px;transform-origin:0 50%;transform:scaleX(1.0546);">Tekstit</span>
<svg style="left:2153px;top:889px" width="20" height="20" viewBox="0 0 20 20"><rect x="0.5" y="0.5" width="19" height="19" fill="#fff" stroke="#333"/><path d="M4 10 L8 14.5 L16 5" fill="none" stroke="#222" stroke-width="1.5"/></svg>
<span class="t" style="top:888.96px;font-size:18px;line-height:25px;color:#000;left:2178.3px;transform-origin:0 50%;transform:scaleX(1.0312);">Näytä varoitukset</span>
<svg style="left:2153px;top:924px" width="20" height="20" viewBox="0 0 20 20"><rect x="0.5" y="0.5" width="19" height="19" fill="#fff" stroke="#333"/></svg>
<span class="t" style="top:923.66px;font-size:18px;line-height:25px;color:#000;left:2178.3px;transform-origin:0 50%;transform:scaleX(1.0306);">GT-matematiikka</span>
<div class="a" style="left:1864px;top:970px;width:548px;height:125px;border:1px solid #a0a0a0;"></div>
<div class="a" style="left:1873px;top:982px;width:130px;height:40px;overflow:hidden">
<span class="t" style="top:10.76px;font-size:18px;line-height:25px;color:#000;left:0.2px;transform-origin:0 50%;transform:scaleX(1.03);transform-origin:0 50%;">Muunnostiedosto</span>
</div>
<div class="a" style="left:2013px;top:980px;width:350px;height:35px;background:#fff;border:1px solid #7a7a7a;"></div>
<div class="a" style="left:2374px;top:981px;width:28px;height:33px;background:#e1e1e1;border:1px solid #adadad;"></div>
<span class="t" style="top:986.46px;font-size:18px;line-height:25px;color:#000;left:2379.5px;transform-origin:0 50%;transform:scaleX(1.0989);">...</span>
<svg style="left:2012.5px;top:1027px" width="20" height="20" viewBox="0 0 20 20"><circle cx="10" cy="10" r="9.3" fill="#fff" stroke="#333"/><circle cx="10" cy="10" r="4.6" fill="#222"/></svg>
<svg style="left:2012.5px;top:1062px" width="20" height="20" viewBox="0 0 20 20"><circle cx="10" cy="10" r="9.3" fill="#fff" stroke="#333"/></svg>
<span class="t" style="top:1026.36px;font-size:18px;line-height:25px;color:#000;left:2038.2px;transform-origin:0 50%;transform:scaleX(1.0142);">Vasemmasta sarakkeesta oikeaan</span>
<span class="t" style="top:1061.26px;font-size:18px;line-height:25px;color:#000;left:2038.2px;transform-origin:0 50%;transform:scaleX(1.0083);">Oikeasta sarakkeesta vasempaan</span>
<div class="a" style="left:1864px;top:1108px;width:548px;height:194px;border:1px solid #a0a0a0;"></div>
<span class="t" style="top:1130.36px;font-size:18px;line-height:25px;color:#000;left:1873.2px;transform-origin:0 50%;transform:scaleX(1.0101);">Kooditiedosto</span>
<div class="a" style="left:2013px;top:1118px;width:350px;height:35px;background:#fff;border:1px solid #7a7a7a;"></div>
<div class="a" style="left:2374px;top:1119px;width:28px;height:33px;background:#e1e1e1;border:1px solid #adadad;"></div>
<span class="t" style="top:1124.46px;font-size:18px;line-height:25px;color:#000;left:2379.5px;transform-origin:0 50%;transform:scaleX(1.0989);">...</span>
<div class="a" style="left:1873px;top:1166px;width:130px;height:40px;overflow:hidden">
<span class="t" style="top:10.96px;font-size:18px;line-height:25px;color:#000;left:0.2px;transform-origin:0 50%;transform:scaleX(1.035);transform-origin:0 50%;">Merkkimuunnost</span>
</div>
<div class="a" style="left:2013px;top:1167px;width:350px;height:35px;background:#fff;border:1px solid #7a7a7a;"></div>
<div class="a" style="left:2374px;top:1168px;width:28px;height:33px;background:#e1e1e1;border:1px solid #adadad;"></div>
<span class="t" style="top:1173.46px;font-size:18px;line-height:25px;color:#000;left:2379.5px;transform-origin:0 50%;transform:scaleX(1.0989);">...</span>
<span class="t" style="top:1222.56px;font-size:18px;line-height:25px;color:#000;left:1873.2px;transform-origin:0 50%;transform:scaleX(1.0147);">Alkutiedosto</span>
<div class="a" style="left:2013px;top:1210px;width:350px;height:35px;background:#fff;border:1px solid #7a7a7a;"></div>
<div class="a" style="left:2374px;top:1211px;width:28px;height:33px;background:#e1e1e1;border:1px solid #adadad;"></div>
<span class="t" style="top:1216.46px;font-size:18px;line-height:25px;color:#000;left:2379.5px;transform-origin:0 50%;transform:scaleX(1.0989);">...</span>
<span class="t" style="top:1268.86px;font-size:18px;line-height:25px;color:#000;left:1873.2px;transform-origin:0 50%;transform:scaleX(1.0210);">Mallinetiedosto</span>
<div class="a" style="left:2013px;top:1256px;width:350px;height:35px;background:#fff;border:1px solid #7a7a7a;"></div>
<div class="a" style="left:2374px;top:1257px;width:28px;height:33px;background:#e1e1e1;border:1px solid #adadad;"></div>
<span class="t" style="top:1262.46px;font-size:18px;line-height:25px;color:#000;left:2379.5px;transform-origin:0 50%;transform:scaleX(1.0989);">...</span>
<div class="a" style="left:2013px;top:612px;width:390px;height:31px;background:#cce4f7;border:1px solid #0078d7;"></div>
<span class="t" style="top:616.16px;font-size:18px;line-height:25px;color:#000;left:2017.6px;transform-origin:0 50%;transform:scaleX(1.0257);">TrimbleTTM</span>
<svg style="left:2380px;top:624.5px" width="14" height="8" viewBox="0 0 14 8"><path d="M2 1.500 L7 6.500 L12 1.500" fill="none" stroke="#444" stroke-width="1.050"/></svg>
<div class="a" style="left:2013px;top:643px;width:390px;height:232px;background:#fff;border:1px solid #0078d7;box-shadow:3px 3px 5px rgba(0,0,0,0.45);"></div>
<span class="t" style="top:644.46px;font-size:18px;line-height:25px;color:#000;left:2016.5px;transform-origin:0 50%;transform:scaleX(0.9835);">3d</span>
<span class="t" style="top:667.46px;font-size:18px;line-height:25px;color:#000;left:2016.5px;transform-origin:0 50%;transform:scaleX(1.0077);">3dVer5</span>
<span class="t" style="top:690.46px;font-size:18px;line-height:25px;color:#000;left:2016.5px;transform-origin:0 50%;transform:scaleX(1.0167);">Dwg2</span>
<span class="t" style="top:713.46px;font-size:18px;line-height:25px;color:#000;left:2016.5px;transform-origin:0 50%;">Dxf2</span>
<span class="t" style="top:736.46px;font-size:18px;line-height:25px;color:#000;left:2016.5px;transform-origin:0 50%;transform:scaleX(1.0055);">GeoTrm</span>
<span class="t" style="top:759.46px;font-size:18px;line-height:25px;color:#000;left:2016.5px;transform-origin:0 50%;transform:scaleX(1.0066);">Gltf</span>
<span class="t" style="top:782.46px;font-size:18px;line-height:25px;color:#000;left:2016.5px;transform-origin:0 50%;">LandXml</span>
<span class="t" style="top:805.46px;font-size:18px;line-height:25px;color:#000;left:2016.5px;transform-origin:0 50%;transform:scaleX(1.0281);">Novatron</span>
<span class="t" style="top:828.46px;font-size:18px;line-height:25px;color:#000;left:2016.5px;transform-origin:0 50%;transform:scaleX(0.9168);">ProXY</span>
<div class="a" style="left:2014px;top:851px;width:388px;height:23.2px;background:#0078d7;"></div>
<span class="t" style="top:851.46px;font-size:18px;line-height:25px;color:#fff;left:2016.5px;transform-origin:0 50%;transform:scaleX(1.0267);">TrimbleTTM</span>
</body></html>
